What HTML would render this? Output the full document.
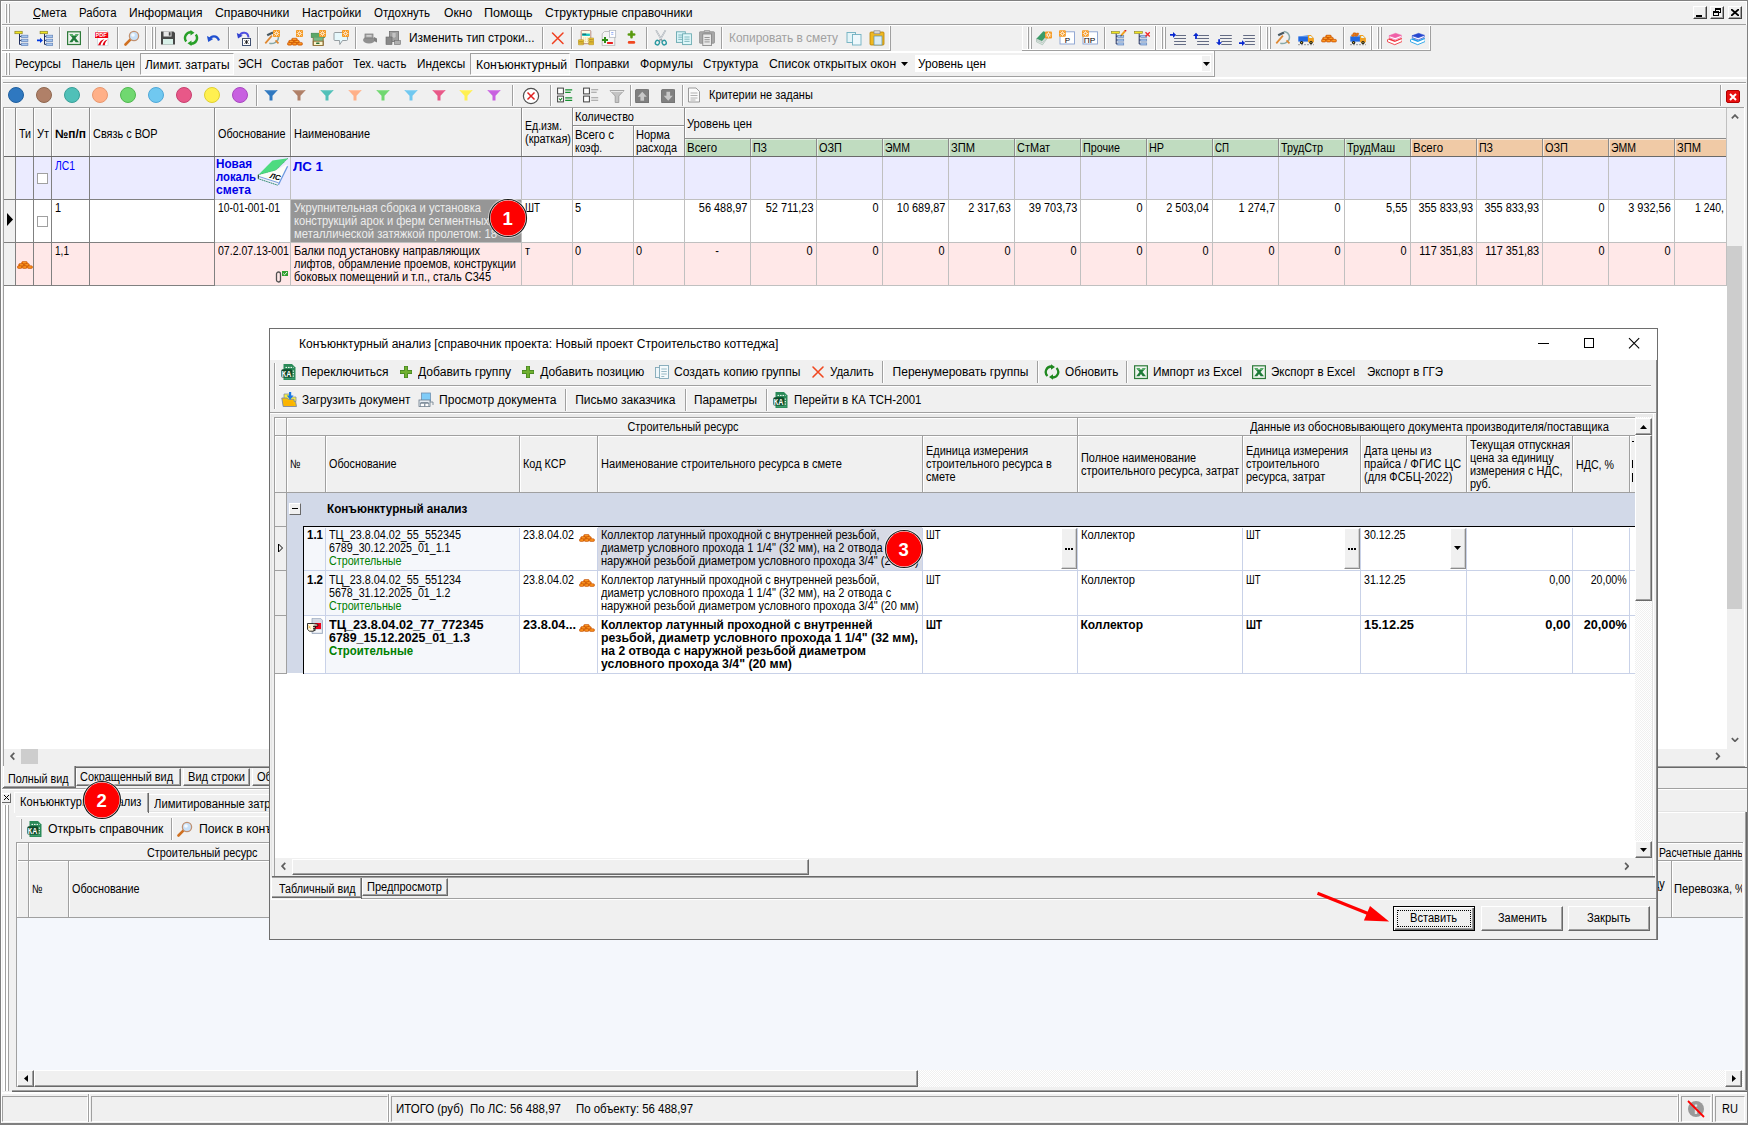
<!DOCTYPE html>
<html lang="ru"><head><meta charset="utf-8"><title>Конъюнктурный анализ</title>
<style>
html,body{margin:0;padding:0;background:#f0f0f0}
#root{position:relative;width:1748px;height:1125px;overflow:hidden;background:#f0f0f0;font-family:"Liberation Sans",sans-serif;font-size:12px;color:#000}
#root div,#root span,#root svg{position:absolute}
#root span{white-space:pre;line-height:14px}
.s{font-family:"Liberation Sans",sans-serif}
.g{font-family:"Liberation Sans",sans-serif}
.btn{background:#e1e1e1;border:1px solid #adadad;box-sizing:border-box}

</style></head><body>
<div id="root">
<div style="left:0px;top:0px;width:1748px;height:1px;background:#808080;"></div>
<div style="left:0px;top:1px;width:1748px;height:1px;background:#ffffff;"></div>
<div style="left:5px;top:4px;width:1px;height:19px;background:#ffffff;"></div>
<div style="left:6px;top:4px;width:1px;height:19px;background:#a0a0a0;"></div>
<div style="left:7px;top:4px;width:1px;height:19px;background:#f0f0f0;"></div>
<div style="left:8px;top:4px;width:1px;height:19px;background:#ffffff;"></div>
<div style="left:9px;top:4px;width:1px;height:19px;background:#a0a0a0;"></div>
<span class="s" style="top:5px;left:33px;transform-origin:0 0;line-height:16px;transform:scaleX(0.956);">Смета</span>
<span class="s" style="top:5px;left:79px;transform-origin:0 0;line-height:16px;transform:scaleX(0.947);">Работа</span>
<span class="s" style="top:5px;left:129px;transform-origin:0 0;line-height:16px;">Информация</span>
<span class="s" style="top:5px;left:215.2px;transform-origin:0 0;line-height:16px;transform:scaleX(1.022);">Справочники</span>
<span class="s" style="top:5px;left:302.3px;transform-origin:0 0;line-height:16px;transform:scaleX(1.009);">Настройки</span>
<span class="s" style="top:5px;left:374.3px;transform-origin:0 0;line-height:16px;transform:scaleX(0.961);">Отдохнуть</span>
<span class="s" style="top:5px;left:443.5px;transform-origin:0 0;line-height:16px;transform:scaleX(1.011);">Окно</span>
<span class="s" style="top:5px;left:484.3px;transform-origin:0 0;line-height:16px;transform:scaleX(1.050);">Помощь</span>
<span class="s" style="top:5px;left:545.2px;transform-origin:0 0;line-height:16px;transform:scaleX(1.013);">Структурные справочники</span>
<div style="left:33px;top:18px;width:7px;height:1px;background:#000;"></div>
<div style="left:1693px;top:6px;width:14px;height:13px;background:#f0f0f0;box-sizing:border-box;border:1px solid;border-color:#fff #404040 #404040 #fff;box-shadow:inset -1px -1px 0 #a0a0a0"></div>
<div style="left:1696px;top:15px;width:6px;height:2px;background:#000;"></div>
<div style="left:1710px;top:6px;width:14px;height:13px;background:#f0f0f0;box-sizing:border-box;border:1px solid;border-color:#fff #404040 #404040 #fff;box-shadow:inset -1px -1px 0 #a0a0a0"></div>
<div style="left:1715px;top:8px;width:6px;height:5px;box-sizing:border-box;border:1px solid #000;border-top-width:2px"></div>
<div style="left:1713px;top:11px;width:6px;height:5px;background:#f0f0f0;box-sizing:border-box;border:1px solid #000;border-top-width:2px"></div>
<div style="left:1728px;top:6px;width:14px;height:13px;background:#f0f0f0;box-sizing:border-box;border:1px solid;border-color:#fff #404040 #404040 #fff;box-shadow:inset -1px -1px 0 #a0a0a0"></div>
<svg style="left:1731px;top:9px" width="8" height="7" viewBox="0 0 8 7"><path d="M0 0l8 7M8 0L0 7" stroke="#000" stroke-width="1.800"/></svg>
<div style="left:0px;top:24px;width:1748px;height:1px;background:#a0a0a0;"></div>
<div style="left:0px;top:25px;width:1431px;height:1px;background:#ffffff;"></div>
<div style="left:0px;top:49px;width:891px;height:1px;background:#ffffff;"></div>
<div style="left:0px;top:50px;width:891px;height:1px;background:#a0a0a0;"></div>
<div style="left:0px;top:51px;width:1215px;height:1px;background:#ffffff;"></div>
<div style="left:0px;top:52px;width:1215px;height:1px;background:#ffffff;"></div>
<div style="left:5px;top:27px;width:1px;height:22px;background:#ffffff;"></div>
<div style="left:6px;top:27px;width:1px;height:22px;background:#a0a0a0;"></div>
<div style="left:7px;top:27px;width:1px;height:22px;background:#f0f0f0;"></div>
<div style="left:8px;top:27px;width:1px;height:22px;background:#ffffff;"></div>
<div style="left:9px;top:27px;width:1px;height:22px;background:#a0a0a0;"></div>
<svg style="left:14px;top:30px" width="16" height="16" viewBox="0 0 16 16"><path d="M5.500 3.700V14.400M5.500 6.400h2M5.500 10.400h2M5.500 14.400h2" stroke="#203060" fill="none"/><rect x=".9" y="1.300" width="7.300" height="2.400" fill="#f0e420" stroke="#8a8428" stroke-width=".7"/><rect x="7.300" y="5.200" width="6.600" height="2.400" fill="#a8c8f0" stroke="#6484b8" stroke-width=".7"/><rect x="7.300" y="9.200" width="6.600" height="2.400" fill="#a8c8f0" stroke="#6484b8" stroke-width=".7"/><rect x="7.300" y="13.200" width="6.600" height="2.400" fill="#a8c8f0" stroke="#6484b8" stroke-width=".7"/></svg>
<svg style="left:37px;top:30px" width="16" height="16" viewBox="0 0 16 16"><path d="M7.500 3.700V14.400M7.500 6.400h2M7.500 10.400h2M7.500 14.400h2" stroke="#203060" fill="none"/><rect x="3.100" y="1.300" width="7.400" height="2.400" fill="#f0e420" stroke="#8a8428" stroke-width=".7"/><rect x="9.200" y="5.200" width="6.500" height="2.400" fill="#a8c8f0" stroke="#6484b8" stroke-width=".7"/><rect x="9.200" y="9.200" width="6.500" height="2.400" fill="#a8c8f0" stroke="#6484b8" stroke-width=".7"/><rect x="9.200" y="13.200" width="6.500" height="2.400" fill="#a8c8f0" stroke="#6484b8" stroke-width=".7"/><path d="M0 9.500h3V7.800L5.900 10.400 3 13v-1.700H0z" fill="#0038e0"/></svg>
<svg style="left:66px;top:30px" width="16" height="16" viewBox="0 0 16 16"><rect x="1.600" y="1.800" width="12.800" height="12.700" fill="#eef4ee" stroke="#2e7a3a" stroke-width="1.200"/><path d="M3.400 4.200h3.100l1.500 2 1.700-2h3L9.500 8l3.500 4.200h-3.300L8 10 6.300 12.200H3.200L6.500 8z" fill="#1e7a38"/><path d="M3.400 4.200h3.100L8 6.200 9.700 4.200h3L11 6H4.800z" fill="#58b068"/></svg>
<svg style="left:95px;top:30px" width="16" height="16" viewBox="0 0 16 16"><path d="M2.500 .5h9l1.500 1.500V15.600H2.500z" fill="#fff" stroke="#c0c8d0" stroke-width=".6"/><rect x="-.8" y="2.400" width="13.900" height="5.600" fill="#f00010"/><text x="6.100" y="7.300" font-size="5.800" font-weight="bold" fill="#fff" text-anchor="middle" font-family="Liberation Sans,sans-serif" textLength="11" lengthAdjust="spacingAndGlyphs">PDF</text><path d="M3 15.300c1.500-4 4-5.800 6.500-6-2.200 1.600-3.500 3.600-4 6zM7.500 15.300c.6-3.200 2.400-5.200 5.200-5.800-1.700 1.400-2.700 3.300-2.900 5.800z" fill="#e00010"/></svg>
<svg style="left:124px;top:30px" width="16" height="16" viewBox="0 0 16 16"><path d="M6.800 9.200L1.500 14.500" stroke="#d07020" stroke-width="2.600" stroke-linecap="round"/><circle cx="10" cy="6" r="4.600" fill="#c8e0f8" stroke="#c09070" stroke-width="1.300"/><circle cx="9" cy="5" r="1.800" fill="#fff" opacity=".8"/></svg>
<div style="left:59px;top:27px;width:1px;height:22px;background:#a0a0a0;"></div>
<div style="left:60px;top:27px;width:1px;height:22px;background:#ffffff;"></div>
<div style="left:88px;top:27px;width:1px;height:22px;background:#a0a0a0;"></div>
<div style="left:89px;top:27px;width:1px;height:22px;background:#ffffff;"></div>
<div style="left:117px;top:27px;width:1px;height:22px;background:#a0a0a0;"></div>
<div style="left:118px;top:27px;width:1px;height:22px;background:#ffffff;"></div>
<div style="left:145px;top:26px;width:1px;height:24px;background:#a0a0a0;"></div>
<div style="left:146px;top:26px;width:1px;height:24px;background:#ffffff;"></div>
<div style="left:151px;top:27px;width:1px;height:22px;background:#ffffff;"></div>
<div style="left:152px;top:27px;width:1px;height:22px;background:#a0a0a0;"></div>
<div style="left:153px;top:27px;width:1px;height:22px;background:#f0f0f0;"></div>
<div style="left:154px;top:27px;width:1px;height:22px;background:#ffffff;"></div>
<div style="left:155px;top:27px;width:1px;height:22px;background:#a0a0a0;"></div>
<svg style="left:160px;top:30px" width="16" height="16" viewBox="0 0 16 16"><path d="M1 1.500h12.500L15 3v11.500H1z" fill="#484848"/><rect x="3.500" y="1.500" width="8" height="5" fill="#e8e8e8"/><rect x="8.800" y="2.200" width="1.800" height="3.400" fill="#484848"/><rect x="3" y="9" width="10" height="5.500" fill="#d8f0e8"/></svg>
<svg style="left:183px;top:30px" width="16" height="16" viewBox="0 0 16 16"><path d="M8 2.200A5.800 5.800 0 0 0 3.200 11.500" fill="none" stroke="#28a028" stroke-width="2.400"/><path d="M8 13.800A5.800 5.800 0 0 0 12.800 4.500" fill="none" stroke="#28a028" stroke-width="2.400"/><path d="M7.500 0l4 2.700-4 2.800zM8.500 16l-4-2.700 4-2.800z" fill="#28a028"/></svg>
<svg style="left:206px;top:30px" width="16" height="16" viewBox="0 0 16 16"><path d="M3.500 9.500C5 5.500 11 5 13 10.500" fill="none" stroke="#2050d0" stroke-width="2.200"/><path d="M1 6l1.200 6 5-3z" fill="#2050d0"/></svg>
<svg style="left:236px;top:30px" width="16" height="16" viewBox="0 0 16 16"><path d="M3.500 6C5 1.500 12 1.500 12.500 7.500" fill="none" stroke="#5050e0" stroke-width="2"/><path d="M.8 3l1.200 5.500 4.600-2.800z" fill="#3040d0"/><rect x="6.500" y="8.500" width="8" height="7" fill="#fff" stroke="#405070" stroke-width="1"/><path d="M8.500 10.500l4 3M12.500 10.500l-4 3M10.500 10v4" stroke="#202020" stroke-width=".9"/></svg>
<svg style="left:264px;top:30px" width="16" height="16" viewBox="0 0 16 16"><path d="M9 1.400C15.500 2.500 16 9.500 11.500 12.300 9.500 13.600 7 13.800 5.300 13.300" fill="none" stroke="#88a8a8" stroke-width="1.500"/><path d="M11.500 10.400l3 3" stroke="#e08830" stroke-width="1.700"/><path d="M1.300 13.400L7.900 5.600" stroke="#e08830" stroke-width="1.700"/><path d="M3.200 5.200L9 2.500" stroke="#485860" stroke-width="2.300"/><rect x="9" y="0" width="7" height="7" rx="1" fill="#f59a23"/><circle cx="12.500" cy="3.500" r="1.350" fill="none" stroke="#fff" stroke-width=".9"/><path d="M12.500 .7v1M12.500 5.300v1M9.700 3.500h1M14.300 3.500h1M10.500 1.500l.7.7M13.800 4.800l.7.7M14.500 1.500l-.7.7M11.200 4.800l-.7.7" stroke="#fff" stroke-width=".8"/></svg>
<svg style="left:287px;top:30px" width="16" height="16" viewBox="0 0 16 16"><g transform="translate(0,1.700)"><g fill="#f07808" stroke="#b84800" stroke-width=".5"><rect x="4.600" y="6.500" width="5.800" height="2.800" rx="1.300"/><rect x="1.600" y="8.600" width="5.300" height="2.700" rx="1.300"/><rect x="7.100" y="8.600" width="5.300" height="2.700" rx="1.300"/><rect x=".4" y="10.700" width="4.600" height="2.800" rx="1.300"/><rect x="5.200" y="10.700" width="4.800" height="2.800" rx="1.300"/><rect x="10.300" y="10.700" width="5.200" height="2.800" rx="1.300"/></g><path d="M6 7.700h3.200M3 9.800h2.800M8.500 9.800h2.800M1.500 12h2.500M6.500 12h2.500M11.500 12h3" stroke="#ffb040" stroke-width=".7"/></g><rect x="9" y="0" width="7" height="7" rx="1" fill="#f59a23"/><circle cx="12.500" cy="3.500" r="1.350" fill="none" stroke="#fff" stroke-width=".9"/><path d="M12.500 .7v1M12.500 5.300v1M9.700 3.500h1M14.300 3.500h1M10.500 1.500l.7.7M13.800 4.800l.7.7M14.500 1.500l-.7.7M11.200 4.800l-.7.7" stroke="#fff" stroke-width=".8"/></svg>
<svg style="left:310px;top:30px" width="16" height="16" viewBox="0 0 16 16"><rect x="1.200" y="3.200" width="13.600" height="4.400" fill="#5aa868" stroke="#3c8048" stroke-width=".6"/><rect x="3.200" y="7.600" width="10" height="3.600" fill="#78b884"/><rect x="3.200" y="11.200" width="10" height="4.300" fill="#fbf4cc" stroke="#8a6a30" stroke-width=".9"/><path d="M3.200 7.600v7.900M13.200 7.600v7.900" stroke="#8a6a30" stroke-width=".9"/><rect x="6" y="12.600" width="3.600" height="1.300" rx=".6" fill="#2a6a30"/><rect x="9" y="0" width="7" height="7" rx="1" fill="#f59a23"/><circle cx="12.500" cy="3.500" r="1.350" fill="none" stroke="#fff" stroke-width=".9"/><path d="M12.500 .7v1M12.500 5.300v1M9.700 3.500h1M14.300 3.500h1M10.500 1.500l.7.7M13.800 4.800l.7.7M14.500 1.500l-.7.7M11.200 4.800l-.7.7" stroke="#fff" stroke-width=".8"/></svg>
<svg style="left:333px;top:30px" width="16" height="16" viewBox="0 0 16 16"><path d="M2 2.500h11.500a1 1 0 0 1 1 1v6a1 1 0 0 1-1 1H9.500L6.800 14.500 6.500 10.500H2a1 1 0 0 1-1-1v-6a1 1 0 0 1 1-1z" fill="#e6f8fc" stroke="#8c9498" stroke-width=".9"/><rect x="9" y="0" width="7" height="7" rx="1" fill="#f59a23"/><circle cx="12.500" cy="3.500" r="1.350" fill="none" stroke="#fff" stroke-width=".9"/><path d="M12.500 .7v1M12.500 5.300v1M9.700 3.500h1M14.300 3.500h1M10.500 1.500l.7.7M13.800 4.800l.7.7M14.500 1.500l-.7.7M11.200 4.800l-.7.7" stroke="#fff" stroke-width=".8"/></svg>
<svg style="left:362px;top:30px" width="16" height="16" viewBox="0 0 16 16"><ellipse cx="7" cy="10" rx="6" ry="3.500" fill="#909090"/><rect x="3" y="4" width="8" height="4" fill="#a8a8a8" stroke="#787878" stroke-width=".7"/><path d="M12 7l3 1.500v4L12 11z" fill="#808080"/><rect x="4.500" y="5.300" width="5" height="1.200" fill="#e0e0e0"/></svg>
<svg style="left:385px;top:30px" width="16" height="16" viewBox="0 0 16 16"><rect x="4.500" y="1.500" width="9" height="10" fill="#a0a0a0" stroke="#707070" stroke-width=".8"/><rect x="1" y="7" width="6" height="7.500" fill="#888" stroke="#686868" stroke-width=".6"/><rect x="9.500" y="10.500" width="6" height="4" fill="#b0b0b0" stroke="#707070" stroke-width=".6"/><path d="M7 4h4M7 6h4M9 3v5" stroke="#d8d8d8" stroke-width=".8"/></svg>
<svg style="left:550px;top:30px" width="16" height="16" viewBox="0 0 16 16"><path d="M2.500 3l10.500 10.500M13 3L2.500 13.500" stroke="#f04020" stroke-width="1.500" stroke-linecap="round"/></svg>
<svg style="left:578px;top:30px" width="16" height="16" viewBox="0 0 16 16"><rect x="3.200" y=".4" width="9.600" height="13.300" rx="1" fill="#fffbe4" stroke="#a87468" stroke-width=".8"/><rect x="4.200" y="3.600" width="7.700" height="2.400" fill="#20c4c4"/><rect x="4.200" y="3.600" width="4" height="1.200" fill="#106868"/><path d="M5 8h6.200M5 9.800h6.200M5 11.600h6.200" stroke="#e8d8a0" stroke-width="1" stroke-dasharray="1.200 .7"/><rect x="0.2" y="9.8" width="5.5" height="1.600" rx=".7" fill="#f4d040" stroke="#a07808" stroke-width=".5"/><rect x="0.2" y="11.5" width="5.5" height="1.600" rx=".7" fill="#f4d040" stroke="#a07808" stroke-width=".5"/><rect x="0.2" y="13.2" width="5.5" height="1.600" rx=".7" fill="#f4d040" stroke="#a07808" stroke-width=".5"/><rect x="10.6" y="8.0" width="5.3" height="1.600" rx=".7" fill="#f4d040" stroke="#a07808" stroke-width=".5"/><rect x="10.6" y="9.7" width="5.3" height="1.600" rx=".7" fill="#f4d040" stroke="#a07808" stroke-width=".5"/><rect x="10.6" y="11.4" width="5.3" height="1.600" rx=".7" fill="#f4d040" stroke="#a07808" stroke-width=".5"/><rect x="10.6" y="13.1" width="5.3" height="1.600" rx=".7" fill="#f4d040" stroke="#a07808" stroke-width=".5"/></svg>
<svg style="left:601px;top:30px" width="16" height="16" viewBox="0 0 16 16"><path d="M3.500 1.500H12l1.800 1.800V15.700H1.200V3.800z" fill="#f4f4f4" stroke="#b0b0b0" stroke-width=".8"/><rect x="8.500" y=".3" width="6.200" height="7" fill="#fff" stroke="#a8b0b8" stroke-width=".7"/><path d="M10.200 2.500h2.200M10.200 4.300h2.200" stroke="#7090f0" stroke-width=".7"/><path d="M1 10h6M4 7v6" stroke="#2c8c14" stroke-width="2"/><rect x="6" y="12" width="6" height="1.900" rx=".6" fill="#e82020"/></svg>
<svg style="left:624px;top:30px" width="16" height="16" viewBox="0 0 16 16"><path d="M4.800 4.500h5.400M7.500 1.800v5.400" stroke="#5a9a10" stroke-width="2.600" stroke-linecap="round"/><rect x="3.800" y="11.100" width="7.400" height="2.700" rx="1.300" fill="#f04820"/></svg>
<svg style="left:653px;top:30px" width="16" height="16" viewBox="0 0 16 16"><path d="M3 .2l6.300 11M12.600 .2L6.300 11.200" stroke="#98a0a8" stroke-width="1.500"/><path d="M3 .2l5 8.800M12.600 .2L7.600 9" stroke="#fff" stroke-width=".6"/><ellipse cx="4.400" cy="12.600" rx="2" ry="2.300" transform="rotate(25 4.400 12.600)" fill="none" stroke="#2898a0" stroke-width="1.400"/><ellipse cx="11.200" cy="12.600" rx="2" ry="2.300" transform="rotate(-25 11.200 12.600)" fill="none" stroke="#2898a0" stroke-width="1.400"/></svg>
<svg style="left:676px;top:30px" width="16" height="16" viewBox="0 0 16 16"><rect x=".5" y="1.800" width="8.800" height="10.600" fill="#d8f4f8" stroke="#68a8b0" stroke-width=".9"/><path d="M2.300 5h4M2.300 7.200h4M2.300 9.400h4" stroke="#68a8b0" stroke-width=".8"/><rect x="6.600" y="3.800" width="8.800" height="10.800" fill="#e0f8fa" stroke="#68a8b0" stroke-width=".9"/><path d="M8.400 7h5.200M8.400 9.200h5.200M8.400 11.400h5.200" stroke="#68a8b0" stroke-width=".8"/></svg>
<svg style="left:699px;top:30px" width="16" height="16" viewBox="0 0 16 16"><rect x=".3" y="1.700" width="15.200" height="11.600" rx="1" fill="#a8a8a8" stroke="#888" stroke-width=".7"/><rect x="5.300" y=".3" width="5.400" height="2.200" rx=".6" fill="#c0c0c0" stroke="#888" stroke-width=".6"/><rect x="3.800" y="4" width="8.600" height="11.600" fill="#e8e8e8" stroke="#808080" stroke-width=".8"/><path d="M5.500 7.500h5.200M5.500 9.700h5.200M5.500 11.900h5.200" stroke="#808080" stroke-width=".8"/></svg>
<svg style="left:846px;top:30px" width="16" height="16" viewBox="0 0 16 16"><rect x="1" y="2.500" width="8.500" height="10" fill="#e4f4f8" stroke="#70b0c0" stroke-width=".9"/><rect x="6.500" y="4.500" width="8.500" height="10.500" fill="#eef8fc" stroke="#70b0c0" stroke-width=".9"/></svg>
<svg style="left:869px;top:30px" width="16" height="16" viewBox="0 0 16 16"><rect x="1" y="2" width="14" height="13" rx="1" fill="#f0b820" stroke="#b88000" stroke-width=".8"/><rect x="5" y=".8" width="6" height="3" fill="#d8d8d8" stroke="#808080" stroke-width=".6"/><rect x="5" y="6" width="8" height="9" fill="#d8ecf4" stroke="#6090a0" stroke-width=".7"/></svg>
<div style="left:228px;top:27px;width:1px;height:22px;background:#a0a0a0;"></div>
<div style="left:229px;top:27px;width:1px;height:22px;background:#ffffff;"></div>
<div style="left:257px;top:27px;width:1px;height:22px;background:#a0a0a0;"></div>
<div style="left:258px;top:27px;width:1px;height:22px;background:#ffffff;"></div>
<div style="left:355px;top:27px;width:1px;height:22px;background:#a0a0a0;"></div>
<div style="left:356px;top:27px;width:1px;height:22px;background:#ffffff;"></div>
<div style="left:542px;top:27px;width:1px;height:22px;background:#a0a0a0;"></div>
<div style="left:543px;top:27px;width:1px;height:22px;background:#ffffff;"></div>
<div style="left:571px;top:27px;width:1px;height:22px;background:#a0a0a0;"></div>
<div style="left:572px;top:27px;width:1px;height:22px;background:#ffffff;"></div>
<div style="left:646px;top:27px;width:1px;height:22px;background:#a0a0a0;"></div>
<div style="left:647px;top:27px;width:1px;height:22px;background:#ffffff;"></div>
<div style="left:721px;top:27px;width:1px;height:22px;background:#a0a0a0;"></div>
<div style="left:722px;top:27px;width:1px;height:22px;background:#ffffff;"></div>
<span class="s" style="top:29.5px;left:409.3px;transform-origin:0 0;line-height:16px;transform:scaleX(0.995);">Изменить тип строки...</span>
<span class="s" style="top:29.5px;left:729px;transform-origin:0 0;line-height:16px;color:#a0a0a0;transform:scaleX(0.993);">Копировать в смету</span>
<div style="left:889px;top:26px;width:1px;height:24px;background:#ffffff;"></div>
<div style="left:890px;top:26px;width:1px;height:25px;background:#a0a0a0;"></div>
<div style="left:1022px;top:26px;width:1px;height:24px;background:#ffffff;"></div>
<div style="left:1027px;top:27px;width:1px;height:22px;background:#ffffff;"></div>
<div style="left:1028px;top:27px;width:1px;height:22px;background:#a0a0a0;"></div>
<div style="left:1029px;top:27px;width:1px;height:22px;background:#f0f0f0;"></div>
<div style="left:1030px;top:27px;width:1px;height:22px;background:#ffffff;"></div>
<div style="left:1031px;top:27px;width:1px;height:22px;background:#a0a0a0;"></div>
<svg style="left:1036px;top:30px" width="16" height="16" viewBox="0 0 16 16"><path d="M.4 8.800L7.300 1.200l5.700 2L6 11.200z" fill="#3c9c68"/><path d="M.4 8.800L6 11.200l7-8v2.600L6.500 14.800.4 11.800z" fill="#e0e8e4" stroke="#88a898" stroke-width=".5"/><path d="M.6 10.300l5.700 2.600 6.500-8" fill="none" stroke="#a8b8b0" stroke-width=".6"/><g transform="translate(0,1.400)"><rect x="9" y="0" width="7" height="7" rx="1" fill="#f59a23"/><circle cx="12.500" cy="3.500" r="1.350" fill="none" stroke="#fff" stroke-width=".9"/><path d="M12.500 .7v1M12.500 5.300v1M9.700 3.500h1M14.300 3.500h1M10.500 1.500l.7.7M13.800 4.800l.7.7M14.500 1.500l-.7.7M11.200 4.800l-.7.7" stroke="#fff" stroke-width=".8"/></g></svg>
<svg style="left:1059px;top:30px" width="16" height="16" viewBox="0 0 16 16"><rect x="1" y="1.800" width="14.500" height="12.200" fill="#fff" stroke="#88a0d0" stroke-width=".9"/><text x="8.500" y="12.900" font-size="8" fill="#000" text-anchor="middle" font-family="Liberation Sans,sans-serif">Р</text><rect x="0" y=".3" width="6.800" height="6.500" rx="1" fill="#f59a23"/><circle cx="3.400" cy="3.500" r="1.300" fill="none" stroke="#fff" stroke-width=".9"/><path d="M3.400 .9v.9M3.400 5.200v.9M.8 3.500h.9M5.100 3.500h.9M1.500 1.600l.6.600M4.700 4.800l.6.600M5.300 1.600l-.6.600M2.100 4.800l-.6.600" stroke="#fff" stroke-width=".8"/></svg>
<svg style="left:1082px;top:30px" width="16" height="16" viewBox="0 0 16 16"><rect x="1" y="1.800" width="14.500" height="12.200" fill="#fff" stroke="#88a0d0" stroke-width=".9"/><text x="7.500" y="12.900" font-size="8" fill="#000" text-anchor="middle" font-family="Liberation Sans,sans-serif" textLength="11.500" lengthAdjust="spacingAndGlyphs">ПР</text><rect x="0" y=".3" width="6.800" height="6.500" rx="1" fill="#f59a23"/><circle cx="3.400" cy="3.500" r="1.300" fill="none" stroke="#fff" stroke-width=".9"/><path d="M3.400 .9v.9M3.400 5.200v.9M.8 3.500h.9M5.100 3.500h.9M1.500 1.600l.6.600M4.700 4.800l.6.600M5.300 1.600l-.6.600M2.100 4.800l-.6.600" stroke="#fff" stroke-width=".8"/></svg>
<svg style="left:1111px;top:30px" width="16" height="16" viewBox="0 0 16 16"><path d="M5.200 3.400V14M5.200 6.300h1.500M5.200 10h1.500M5.200 14h1.500" stroke="#203060" fill="none"/><rect x=".4" y="1.500" width="8" height="1.900" fill="#f0e420" stroke="#8a8428" stroke-width=".6"/><rect x="6.700" y="5.300" width="6" height="2" fill="#a8c8f0" stroke="#6484b8" stroke-width=".7"/><rect x="6.700" y="9.100" width="6" height="2" fill="#a8c8f0" stroke="#6484b8" stroke-width=".7"/><rect x="6.700" y="12.900" width="6" height="2.100" fill="#a8c8f0" stroke="#6484b8" stroke-width=".7"/><path d="M10.300 5.300L14 1.100" stroke="#f0a020" stroke-width="2"/><path d="M14 1.100l.9-1" stroke="#e02020" stroke-width="2"/><path d="M9.400 6.400l1.600-.5-1.100-1z" fill="#202020"/></svg>
<svg style="left:1134px;top:30px" width="16" height="16" viewBox="0 0 16 16"><path d="M5.200 3.400V14M5.200 6.300h1.500M5.200 10h1.500M5.200 14h1.500" stroke="#203060" fill="none"/><rect x=".4" y="1.500" width="8" height="1.900" fill="#f0e420" stroke="#8a8428" stroke-width=".6"/><rect x="6.700" y="5.300" width="6" height="2" fill="#a8c8f0" stroke="#6484b8" stroke-width=".7"/><rect x="6.700" y="9.100" width="6" height="2" fill="#a8c8f0" stroke="#6484b8" stroke-width=".7"/><rect x="6.700" y="12.900" width="6" height="2.100" fill="#a8c8f0" stroke="#6484b8" stroke-width=".7"/><path d="M11.500 2.300l4.300 4.200M15.800 2.300l-4.300 4.200" stroke="#f02828" stroke-width="1.300"/></svg>
<div style="left:1104px;top:27px;width:1px;height:22px;background:#a0a0a0;"></div>
<div style="left:1105px;top:27px;width:1px;height:22px;background:#ffffff;"></div>
<div style="left:1022px;top:49px;width:134px;height:1px;background:#ffffff;"></div>
<div style="left:1022px;top:50px;width:134px;height:1px;background:#a0a0a0;"></div>
<div style="left:1154px;top:26px;width:1px;height:24px;background:#ffffff;"></div>
<div style="left:1155px;top:26px;width:1px;height:25px;background:#a0a0a0;"></div>
<div style="left:1156px;top:26px;width:1px;height:24px;background:#ffffff;"></div>
<div style="left:1161px;top:27px;width:1px;height:22px;background:#ffffff;"></div>
<div style="left:1162px;top:27px;width:1px;height:22px;background:#a0a0a0;"></div>
<div style="left:1163px;top:27px;width:1px;height:22px;background:#f0f0f0;"></div>
<div style="left:1164px;top:27px;width:1px;height:22px;background:#ffffff;"></div>
<div style="left:1165px;top:27px;width:1px;height:22px;background:#a0a0a0;"></div>
<svg style="left:1170px;top:30px" width="16" height="16" viewBox="0 0 16 16"><path d="M6 5.500H16M4.100 8.500H16M4.100 11.500H16M4.100 14.500H16" stroke="#646c84" stroke-width="1.100"/><path d="M0 4h3V2L6.200 4.900 3 7.800V5.800H0z" fill="#0828d0"/></svg>
<svg style="left:1193px;top:30px" width="16" height="16" viewBox="0 0 16 16"><path d="M6 5.500H16M4.100 8.500H16M4.100 11.500H16M4.100 14.500H16" stroke="#646c84" stroke-width="1.100"/><path d="M2.100 8.900V5.900H0L3 2.800 6 5.900H3.900v3z" fill="#0828d0"/></svg>
<svg style="left:1216px;top:30px" width="16" height="16" viewBox="0 0 16 16"><path d="M4 5.500H15.800M4 8.500H15.800M5.300 11.500H15.800M5.300 14.500H15.800" stroke="#646c84" stroke-width="1.100"/><path d="M2.200 9.200v3H0l3.100 3.100 3.100-3.100H4v-3z" fill="#0828d0"/></svg>
<svg style="left:1239px;top:30px" width="16" height="16" viewBox="0 0 16 16"><path d="M4.200 5.500H15.900M4.200 8.500H15.900M5.800 11.500H15.900M5.800 14.500H15.900" stroke="#646c84" stroke-width="1.100"/><path d="M0 12.200h3v-2L6.100 13 3 15.900v-2H0z" fill="#0828d0"/></svg>
<div style="left:1156px;top:49px;width:105px;height:1px;background:#ffffff;"></div>
<div style="left:1156px;top:50px;width:105px;height:1px;background:#a0a0a0;"></div>
<div style="left:1259px;top:26px;width:1px;height:24px;background:#ffffff;"></div>
<div style="left:1260px;top:26px;width:1px;height:25px;background:#a0a0a0;"></div>
<div style="left:1261px;top:26px;width:1px;height:24px;background:#ffffff;"></div>
<div style="left:1266px;top:27px;width:1px;height:22px;background:#ffffff;"></div>
<div style="left:1267px;top:27px;width:1px;height:22px;background:#a0a0a0;"></div>
<div style="left:1268px;top:27px;width:1px;height:22px;background:#f0f0f0;"></div>
<div style="left:1269px;top:27px;width:1px;height:22px;background:#ffffff;"></div>
<div style="left:1270px;top:27px;width:1px;height:22px;background:#a0a0a0;"></div>
<svg style="left:1275px;top:30px" width="16" height="16" viewBox="0 0 16 16"><path d="M9 1.400C15.500 2.500 16 9.500 11.500 12.300 9.500 13.600 7 13.800 5.300 13.300" fill="none" stroke="#88a8a8" stroke-width="1.500"/><path d="M11.500 10.400l3 3" stroke="#e08830" stroke-width="1.700"/><path d="M1.300 13.400L7.900 5.600" stroke="#e08830" stroke-width="1.700"/><path d="M3.200 5.200L9 2.500" stroke="#485860" stroke-width="2.300"/></svg>
<svg style="left:1298px;top:30px" width="16" height="16" viewBox="0 0 16 16"><rect x=".3" y="6.400" width="9.800" height="5.200" fill="#2068e0"/><path d="M.3 6.400L10 5.200v1.300z" fill="#4088f0"/><path d="M9.900 5h3l3 3.200v4h-6z" fill="#f0a020"/><path d="M11.200 6h1.700l1.800 2h-3.500z" fill="#dff4ff"/><path d="M0 14.700h16" stroke="#808080" stroke-width=".8" stroke-dasharray="2 1"/><circle cx="3.600" cy="12.600" r="1.700" fill="#181818"/><circle cx="13" cy="12.600" r="1.700" fill="#181818"/><circle cx="3.600" cy="12.600" r=".6" fill="#f8e040"/><circle cx="13" cy="12.600" r=".6" fill="#f8e040"/></svg>
<svg style="left:1321px;top:30px" width="16" height="16" viewBox="0 0 16 16"><g transform="translate(0,-1.400)"><g fill="#f07808" stroke="#b84800" stroke-width=".5"><rect x="4.600" y="6.500" width="5.800" height="2.800" rx="1.300"/><rect x="1.600" y="8.600" width="5.300" height="2.700" rx="1.300"/><rect x="7.100" y="8.600" width="5.300" height="2.700" rx="1.300"/><rect x=".4" y="10.700" width="4.600" height="2.800" rx="1.300"/><rect x="5.200" y="10.700" width="4.800" height="2.800" rx="1.300"/><rect x="10.300" y="10.700" width="5.200" height="2.800" rx="1.300"/></g><path d="M6 7.700h3.200M3 9.800h2.800M8.500 9.800h2.800M1.500 12h2.500M6.500 12h2.500M11.500 12h3" stroke="#ffb040" stroke-width=".7"/></g></svg>
<svg style="left:1350px;top:30px" width="16" height="16" viewBox="0 0 16 16"><rect x=".3" y="6.400" width="9.800" height="5.200" fill="#2068e0"/><path d="M.3 6.400L10 5.200v1.300z" fill="#4088f0"/><path d="M9.900 5h3l3 3.200v4h-6z" fill="#f0a020"/><path d="M11.200 6h1.700l1.800 2h-3.500z" fill="#dff4ff"/><path d="M0 14.700h16" stroke="#808080" stroke-width=".8" stroke-dasharray="2 1"/><circle cx="3.600" cy="12.600" r="1.700" fill="#181818"/><circle cx="13" cy="12.600" r="1.700" fill="#181818"/><circle cx="3.600" cy="12.600" r=".6" fill="#f8e040"/><circle cx="13" cy="12.600" r=".6" fill="#f8e040"/><g fill="#f07808" stroke="#b84800" stroke-width=".4"><rect x="1.500" y="4.600" width="3" height="1.800" rx=".8"/><rect x="4.700" y="4.400" width="3" height="1.800" rx=".8"/><rect x="3" y="2.800" width="3" height="1.800" rx=".8"/><rect x="6.200" y="3" width="2.600" height="1.700" rx=".8"/></g></svg>
<div style="left:1343px;top:27px;width:1px;height:22px;background:#a0a0a0;"></div>
<div style="left:1344px;top:27px;width:1px;height:22px;background:#ffffff;"></div>
<div style="left:1261px;top:49px;width:111px;height:1px;background:#ffffff;"></div>
<div style="left:1261px;top:50px;width:111px;height:1px;background:#a0a0a0;"></div>
<div style="left:1370px;top:26px;width:1px;height:24px;background:#ffffff;"></div>
<div style="left:1371px;top:26px;width:1px;height:25px;background:#a0a0a0;"></div>
<div style="left:1372px;top:26px;width:1px;height:24px;background:#ffffff;"></div>
<div style="left:1377px;top:27px;width:1px;height:22px;background:#ffffff;"></div>
<div style="left:1378px;top:27px;width:1px;height:22px;background:#a0a0a0;"></div>
<div style="left:1379px;top:27px;width:1px;height:22px;background:#f0f0f0;"></div>
<div style="left:1380px;top:27px;width:1px;height:22px;background:#ffffff;"></div>
<div style="left:1381px;top:27px;width:1px;height:22px;background:#a0a0a0;"></div>
<svg style="left:1386px;top:30px" width="16" height="16" viewBox="0 0 16 16"><path d="M1.500 9.500v2.200l7.200 3 7.500-3.200V9.200" fill="#fff" stroke="#f03840" stroke-width=".9"/><path d="M1.500 9.300l2-1.100 5.700 2.300 6-2.600 1 .9-7.400 3.200z" fill="#f03840"/><path d="M3.300 5.600v2l5.900 2.300 6-2.500V5.200l-6 2.400z" fill="#fff" stroke="#f060a8" stroke-width=".7"/><path d="M3.300 5.600L9.600 3.300l5.600 1.900-6 2.400z" fill="#f060a8" stroke="#f060a8" stroke-width=".5"/></svg>
<svg style="left:1409px;top:30px" width="16" height="16" viewBox="0 0 16 16"><path d="M1.500 9.500v2.200l7.200 3 7.500-3.200V9.200" fill="#fff" stroke="#20a0e8" stroke-width=".9"/><path d="M1.500 9.300l2-1.100 5.700 2.300 6-2.600 1 .9-7.400 3.200z" fill="#20a0e8"/><path d="M3.300 5.600v2l5.900 2.300 6-2.500V5.200l-6 2.400z" fill="#fff" stroke="#2848d0" stroke-width=".7"/><path d="M3.300 5.600L9.600 3.300l5.600 1.900-6 2.400z" fill="#2848d0" stroke="#2848d0" stroke-width=".5"/></svg>
<div style="left:1372px;top:49px;width:59px;height:1px;background:#ffffff;"></div>
<div style="left:1372px;top:50px;width:59px;height:1px;background:#a0a0a0;"></div>
<div style="left:1429px;top:26px;width:1px;height:24px;background:#ffffff;"></div>
<div style="left:1430px;top:26px;width:1px;height:25px;background:#a0a0a0;"></div>
<div style="left:5px;top:53px;width:1px;height:22px;background:#ffffff;"></div>
<div style="left:6px;top:53px;width:1px;height:22px;background:#a0a0a0;"></div>
<div style="left:7px;top:53px;width:1px;height:22px;background:#f0f0f0;"></div>
<div style="left:8px;top:53px;width:1px;height:22px;background:#ffffff;"></div>
<div style="left:9px;top:53px;width:1px;height:22px;background:#a0a0a0;"></div>
<div style="left:0px;top:76px;width:1215px;height:1px;background:#a0a0a0;"></div>
<div style="left:1213px;top:53px;width:1px;height:23px;background:#ffffff;"></div>
<div style="left:1214px;top:51px;width:1px;height:26px;background:#a0a0a0;"></div>
<div style="left:0px;top:77px;width:1748px;height:1px;background:#ffffff;"></div>
<div style="left:0px;top:78px;width:1748px;height:1px;background:#ffffff;"></div>
<div style="left:140px;top:53px;width:94px;height:22px;background:#f8f8f8;box-sizing:border-box;border:1px solid;border-color:#a0a0a0 #fff #fff #a0a0a0"></div>
<div style="left:470px;top:53px;width:100px;height:22px;background:#f8f8f8;box-sizing:border-box;border:1px solid;border-color:#a0a0a0 #fff #fff #a0a0a0"></div>
<span class="s" style="top:55.5px;left:15px;transform-origin:0 0;line-height:16px;transform:scaleX(0.972);">Ресурсы</span>
<span class="s" style="top:55.5px;left:71.5px;transform-origin:0 0;line-height:16px;transform:scaleX(0.972);">Панель цен</span>
<span class="s" style="top:56.5px;left:145px;transform-origin:0 0;line-height:16px;transform:scaleX(0.995);">Лимит. затраты</span>
<span class="s" style="top:55.5px;left:238px;transform-origin:0 0;line-height:16px;transform:scaleX(0.924);">ЭСН</span>
<span class="s" style="top:55.5px;left:271.4px;transform-origin:0 0;line-height:16px;transform:scaleX(0.965);">Состав работ</span>
<span class="s" style="top:55.5px;left:353.4px;transform-origin:0 0;line-height:16px;transform:scaleX(0.946);">Тех. часть</span>
<span class="s" style="top:55.5px;left:416.6px;transform-origin:0 0;line-height:16px;transform:scaleX(0.983);">Индексы</span>
<span class="s" style="top:56.5px;left:475.5px;transform-origin:0 0;line-height:16px;transform:scaleX(1.025);">Конъюнктурный</span>
<span class="s" style="top:55.5px;left:575px;transform-origin:0 0;line-height:16px;transform:scaleX(1.017);">Поправки</span>
<span class="s" style="top:55.5px;left:639.5px;transform-origin:0 0;line-height:16px;transform:scaleX(1.017);">Формулы</span>
<span class="s" style="top:55.5px;left:702.6px;transform-origin:0 0;line-height:16px;transform:scaleX(0.969);">Структура</span>
<span class="s" style="top:55.5px;left:769.4px;transform-origin:0 0;line-height:16px;transform:scaleX(1.021);">Список открытых окон</span>
<svg style="left:901px;top:62px" width="7" height="4" viewBox="0 0 7 4"><path d="M0 0h7L3.500 4z" fill="#000"/></svg>
<div style="left:915px;top:55px;width:296px;height:17px;background:#fff;"></div>
<div style="left:1202px;top:56px;width:8px;height:15px;background:#f0f0f0;"></div>
<span class="s" style="top:55.5px;left:918px;transform-origin:0 0;line-height:16px;transform:scaleX(0.977);">Уровень цен</span>
<svg style="left:1202.500px;top:61.500px" width="7" height="4" viewBox="0 0 7 4"><path d="M0 0h7L3.500 4z" fill="#000"/></svg>
<div style="left:3px;top:82px;width:1743px;height:1px;background:#a0a0a0;"></div>
<div style="left:3px;top:83px;width:1743px;height:1px;background:#ffffff;"></div>
<div style="left:8px;top:87px;width:16px;height:16px;background:#2f78c0;border-radius:50%;box-sizing:border-box;border:1px solid #2060a0"></div>
<div style="left:36px;top:87px;width:16px;height:16px;background:#b08068;border-radius:50%;box-sizing:border-box;border:1px solid #906850"></div>
<div style="left:64px;top:87px;width:16px;height:16px;background:#50c0b8;border-radius:50%;box-sizing:border-box;border:1px solid #38a098"></div>
<div style="left:92px;top:87px;width:16px;height:16px;background:#ffb088;border-radius:50%;box-sizing:border-box;border:1px solid #e89870"></div>
<div style="left:120px;top:87px;width:16px;height:16px;background:#70d870;border-radius:50%;box-sizing:border-box;border:1px solid #50b850"></div>
<div style="left:148px;top:87px;width:16px;height:16px;background:#70c8f0;border-radius:50%;box-sizing:border-box;border:1px solid #50a8d8"></div>
<div style="left:176px;top:87px;width:16px;height:16px;background:#e85888;border-radius:50%;box-sizing:border-box;border:1px solid #c84070"></div>
<div style="left:204px;top:87px;width:16px;height:16px;background:#fff050;border-radius:50%;box-sizing:border-box;border:1px solid #e0d030"></div>
<div style="left:232px;top:87px;width:16px;height:16px;background:#c860e0;border-radius:50%;box-sizing:border-box;border:1px solid #a848c0"></div>
<div style="left:256px;top:85px;width:1px;height:21px;background:#a0a0a0;"></div>
<div style="left:257px;top:85px;width:1px;height:21px;background:#ffffff;"></div>
<svg style="left:263px;top:88px" width="16" height="16" viewBox="0 0 16 16"><path d="M1.200 2h13.600l-5.300 5.800v4.800h-3V7.800z" fill="#2f78c0"/><path d="M2.500 2.600h11" stroke="#fff" stroke-opacity=".35" stroke-width=".8"/></svg>
<svg style="left:291px;top:88px" width="16" height="16" viewBox="0 0 16 16"><path d="M1.200 2h13.600l-5.300 5.800v4.800h-3V7.800z" fill="#b08068"/><path d="M2.500 2.600h11" stroke="#fff" stroke-opacity=".35" stroke-width=".8"/></svg>
<svg style="left:319px;top:88px" width="16" height="16" viewBox="0 0 16 16"><path d="M1.200 2h13.600l-5.300 5.800v4.800h-3V7.800z" fill="#50c0b8"/><path d="M2.500 2.600h11" stroke="#fff" stroke-opacity=".35" stroke-width=".8"/></svg>
<svg style="left:347px;top:88px" width="16" height="16" viewBox="0 0 16 16"><path d="M1.200 2h13.600l-5.300 5.800v4.800h-3V7.800z" fill="#ffb088"/><path d="M2.500 2.600h11" stroke="#fff" stroke-opacity=".35" stroke-width=".8"/></svg>
<svg style="left:375px;top:88px" width="16" height="16" viewBox="0 0 16 16"><path d="M1.200 2h13.600l-5.300 5.800v4.800h-3V7.800z" fill="#70d870"/><path d="M2.500 2.600h11" stroke="#fff" stroke-opacity=".35" stroke-width=".8"/></svg>
<svg style="left:403px;top:88px" width="16" height="16" viewBox="0 0 16 16"><path d="M1.200 2h13.600l-5.300 5.800v4.800h-3V7.800z" fill="#70c8f0"/><path d="M2.500 2.600h11" stroke="#fff" stroke-opacity=".35" stroke-width=".8"/></svg>
<svg style="left:431px;top:88px" width="16" height="16" viewBox="0 0 16 16"><path d="M1.200 2h13.600l-5.300 5.800v4.800h-3V7.800z" fill="#e85888"/><path d="M2.500 2.600h11" stroke="#fff" stroke-opacity=".35" stroke-width=".8"/></svg>
<svg style="left:458px;top:88px" width="16" height="16" viewBox="0 0 16 16"><path d="M1.200 2h13.600l-5.300 5.800v4.800h-3V7.800z" fill="#fff050"/><path d="M2.500 2.600h11" stroke="#fff" stroke-opacity=".35" stroke-width=".8"/></svg>
<svg style="left:486px;top:88px" width="16" height="16" viewBox="0 0 16 16"><path d="M1.200 2h13.600l-5.300 5.800v4.800h-3V7.800z" fill="#c860e0"/><path d="M2.500 2.600h11" stroke="#fff" stroke-opacity=".35" stroke-width=".8"/></svg>
<div style="left:512px;top:85px;width:1px;height:21px;background:#a0a0a0;"></div>
<div style="left:513px;top:85px;width:1px;height:21px;background:#ffffff;"></div>
<svg style="left:522px;top:87px" width="18" height="18" viewBox="0 0 18 18"><circle cx="9" cy="9" r="7.600" fill="#fff" stroke="#505050" stroke-width="1.200"/><path d="M5.500 5.500l7 7M12.500 5.500l-7 7" stroke="#e02020" stroke-width="1.500"/></svg>
<div style="left:550px;top:85px;width:1px;height:21px;background:#a0a0a0;"></div>
<div style="left:551px;top:85px;width:1px;height:21px;background:#ffffff;"></div>
<svg style="left:557px;top:87px" width="16" height="16" viewBox="0 0 16 16"><rect x=".6" y="1.100" width="5.800" height="5.800" fill="#fff" stroke="#404040" stroke-width="1"/><rect x=".6" y="9.100" width="5.800" height="5.800" fill="#fff" stroke="#404040" stroke-width="1"/><path d="M2 11.500l1.500 1.700L5 11" stroke="#108020" stroke-width="1.100" fill="none"/><path d="M8.200 2.800h7M8.200 5.300h5.500M8.200 10.800h7M8.200 13.300h7" stroke="#159030" stroke-width="1.200"/></svg>
<svg style="left:583px;top:87px" width="16" height="16" viewBox="0 0 16 16"><rect x=".6" y="1.100" width="5.800" height="5.800" fill="#fff" stroke="#404040" stroke-width="1"/><rect x=".6" y="9.100" width="5.800" height="5.800" fill="#fff" stroke="#404040" stroke-width="1"/><path d="M8.200 2.800h7M8.200 5.300h5.500M8.200 10.800h7M8.200 13.300h7" stroke="#9c9c9c" stroke-width="1.100"/></svg>
<svg style="left:609px;top:88px" width="16" height="16" viewBox="0 0 16 16"><path d="M1 2.500h14l-5.200 5.500v6.500h-3.600V8z" fill="#c4c4c4" stroke="#969696" stroke-width=".8"/><path d="M2 3.500h12" stroke="#e8e8e8" stroke-width="1"/></svg>
<div style="left:630px;top:85px;width:1px;height:21px;background:#a0a0a0;"></div>
<div style="left:631px;top:85px;width:1px;height:21px;background:#ffffff;"></div>
<svg style="left:634.7px;top:88.7px" width="14.5" height="14.5" viewBox="0 0 16 16"><rect x=".5" y=".5" width="15" height="15" rx="1.500" fill="#808080" stroke="#606060" stroke-width=".8"/><path d="M8 3l5 5.500h-3V13H6V8.500H3z" fill="#c8c8c8"/></svg>
<svg style="left:660.8px;top:88.7px" width="14.5" height="14.5" viewBox="0 0 16 16"><rect x=".5" y=".5" width="15" height="15" rx="1.500" fill="#808080" stroke="#606060" stroke-width=".8"/><path d="M8 13l5-5.500h-3V3H6v4.500H3z" fill="#c8c8c8"/></svg>
<div style="left:682px;top:85px;width:1px;height:21px;background:#a0a0a0;"></div>
<div style="left:683px;top:85px;width:1px;height:21px;background:#ffffff;"></div>
<svg style="left:686px;top:87px" width="16" height="16" viewBox="0 0 16 16"><path d="M2.500 1h7.500l3.500 3.500V15h-11z" fill="#fafafa" stroke="#909090" stroke-width=".9"/><path d="M4.500 6h7M4.500 8.500h7M4.500 11h7M4.500 13h5" stroke="#a0a0a0" stroke-width=".8"/></svg>
<span class="s" style="top:87.3px;left:708.5px;transform-origin:0 0;line-height:16px;transform:scaleX(0.914);">Критерии не заданы</span>
<div style="left:1720px;top:85px;width:1px;height:21px;background:#a0a0a0;"></div>
<div style="left:1721px;top:85px;width:1px;height:21px;background:#ffffff;"></div>
<div style="left:1726px;top:90px;width:14px;height:13px;background:#e81010;border-radius:2px;box-sizing:border-box;border:1px solid #b00000"></div>
<svg style="left:1729px;top:92.500px" width="8" height="8" viewBox="0 0 8 8"><path d="M1 1l6 6M7 1L1 7" stroke="#fff" stroke-width="2"/></svg>
<div style="left:4px;top:108px;width:1723px;height:641px;background:#ffffff;"></div>
<div style="left:3px;top:107px;width:1px;height:660px;background:#a0a0a0;"></div>
<div style="left:3px;top:107px;width:1742px;height:1px;background:#a0a0a0;"></div>
<div style="left:4px;top:108px;width:1723px;height:48px;background:#f0f0f0;"></div>
<div style="left:4px;top:156px;width:11px;height:129px;background:#f0f0f0;"></div>
<div style="left:16px;top:157px;width:1710px;height:42px;background:#ebebff;"></div>
<div style="left:16px;top:243px;width:1710px;height:42px;background:#ffe8e8;"></div>
<div style="left:291px;top:200px;width:230px;height:42px;background:#969696;"></div>
<div style="left:685px;top:139px;width:65px;height:17px;background:#c0dcc0;"></div>
<div style="left:751px;top:139px;width:65px;height:17px;background:#c0dcc0;"></div>
<div style="left:817px;top:139px;width:65px;height:17px;background:#c0dcc0;"></div>
<div style="left:883px;top:139px;width:65px;height:17px;background:#c0dcc0;"></div>
<div style="left:949px;top:139px;width:65px;height:17px;background:#c0dcc0;"></div>
<div style="left:1015px;top:139px;width:65px;height:17px;background:#c0dcc0;"></div>
<div style="left:1081px;top:139px;width:65px;height:17px;background:#c0dcc0;"></div>
<div style="left:1147px;top:139px;width:65px;height:17px;background:#c0dcc0;"></div>
<div style="left:1213px;top:139px;width:65px;height:17px;background:#c0dcc0;"></div>
<div style="left:1279px;top:139px;width:65px;height:17px;background:#c0dcc0;"></div>
<div style="left:1345px;top:139px;width:65px;height:17px;background:#c0dcc0;"></div>
<div style="left:1411px;top:139px;width:65px;height:17px;background:#f0caa6;"></div>
<div style="left:1477px;top:139px;width:65px;height:17px;background:#f0caa6;"></div>
<div style="left:1543px;top:139px;width:65px;height:17px;background:#f0caa6;"></div>
<div style="left:1609px;top:139px;width:65px;height:17px;background:#f0caa6;"></div>
<div style="left:1675px;top:139px;width:51px;height:17px;background:#f0caa6;"></div>
<div style="left:4px;top:108px;width:11px;height:1px;background:#ffffff;"></div>
<div style="left:4px;top:108px;width:1px;height:48px;background:#ffffff;"></div>
<div style="left:16px;top:108px;width:17px;height:1px;background:#ffffff;"></div>
<div style="left:16px;top:108px;width:1px;height:48px;background:#ffffff;"></div>
<div style="left:34px;top:108px;width:17px;height:1px;background:#ffffff;"></div>
<div style="left:34px;top:108px;width:1px;height:48px;background:#ffffff;"></div>
<div style="left:52px;top:108px;width:37px;height:1px;background:#ffffff;"></div>
<div style="left:52px;top:108px;width:1px;height:48px;background:#ffffff;"></div>
<div style="left:90px;top:108px;width:124px;height:1px;background:#ffffff;"></div>
<div style="left:90px;top:108px;width:1px;height:48px;background:#ffffff;"></div>
<div style="left:215px;top:108px;width:75px;height:1px;background:#ffffff;"></div>
<div style="left:215px;top:108px;width:1px;height:48px;background:#ffffff;"></div>
<div style="left:291px;top:108px;width:230px;height:1px;background:#ffffff;"></div>
<div style="left:291px;top:108px;width:1px;height:48px;background:#ffffff;"></div>
<div style="left:522px;top:108px;width:50px;height:1px;background:#ffffff;"></div>
<div style="left:522px;top:108px;width:1px;height:48px;background:#ffffff;"></div>
<div style="left:573px;top:108px;width:111px;height:1px;background:#ffffff;"></div>
<div style="left:573px;top:108px;width:1px;height:17px;background:#ffffff;"></div>
<div style="left:573px;top:126px;width:60px;height:1px;background:#ffffff;"></div>
<div style="left:573px;top:126px;width:1px;height:30px;background:#ffffff;"></div>
<div style="left:634px;top:126px;width:50px;height:1px;background:#ffffff;"></div>
<div style="left:634px;top:126px;width:1px;height:30px;background:#ffffff;"></div>
<div style="left:685px;top:108px;width:1041px;height:1px;background:#ffffff;"></div>
<div style="left:685px;top:108px;width:1px;height:30px;background:#ffffff;"></div>
<div style="left:685px;top:139px;width:65px;height:1px;background:rgba(255,255,255,.55);"></div>
<div style="left:685px;top:139px;width:1px;height:17px;background:rgba(255,255,255,.55);"></div>
<div style="left:751px;top:139px;width:65px;height:1px;background:rgba(255,255,255,.55);"></div>
<div style="left:751px;top:139px;width:1px;height:17px;background:rgba(255,255,255,.55);"></div>
<div style="left:817px;top:139px;width:65px;height:1px;background:rgba(255,255,255,.55);"></div>
<div style="left:817px;top:139px;width:1px;height:17px;background:rgba(255,255,255,.55);"></div>
<div style="left:883px;top:139px;width:65px;height:1px;background:rgba(255,255,255,.55);"></div>
<div style="left:883px;top:139px;width:1px;height:17px;background:rgba(255,255,255,.55);"></div>
<div style="left:949px;top:139px;width:65px;height:1px;background:rgba(255,255,255,.55);"></div>
<div style="left:949px;top:139px;width:1px;height:17px;background:rgba(255,255,255,.55);"></div>
<div style="left:1015px;top:139px;width:65px;height:1px;background:rgba(255,255,255,.55);"></div>
<div style="left:1015px;top:139px;width:1px;height:17px;background:rgba(255,255,255,.55);"></div>
<div style="left:1081px;top:139px;width:65px;height:1px;background:rgba(255,255,255,.55);"></div>
<div style="left:1081px;top:139px;width:1px;height:17px;background:rgba(255,255,255,.55);"></div>
<div style="left:1147px;top:139px;width:65px;height:1px;background:rgba(255,255,255,.55);"></div>
<div style="left:1147px;top:139px;width:1px;height:17px;background:rgba(255,255,255,.55);"></div>
<div style="left:1213px;top:139px;width:65px;height:1px;background:rgba(255,255,255,.55);"></div>
<div style="left:1213px;top:139px;width:1px;height:17px;background:rgba(255,255,255,.55);"></div>
<div style="left:1279px;top:139px;width:65px;height:1px;background:rgba(255,255,255,.55);"></div>
<div style="left:1279px;top:139px;width:1px;height:17px;background:rgba(255,255,255,.55);"></div>
<div style="left:1345px;top:139px;width:65px;height:1px;background:rgba(255,255,255,.55);"></div>
<div style="left:1345px;top:139px;width:1px;height:17px;background:rgba(255,255,255,.55);"></div>
<div style="left:1411px;top:139px;width:65px;height:1px;background:rgba(255,255,255,.55);"></div>
<div style="left:1411px;top:139px;width:1px;height:17px;background:rgba(255,255,255,.55);"></div>
<div style="left:1477px;top:139px;width:65px;height:1px;background:rgba(255,255,255,.55);"></div>
<div style="left:1477px;top:139px;width:1px;height:17px;background:rgba(255,255,255,.55);"></div>
<div style="left:1543px;top:139px;width:65px;height:1px;background:rgba(255,255,255,.55);"></div>
<div style="left:1543px;top:139px;width:1px;height:17px;background:rgba(255,255,255,.55);"></div>
<div style="left:1609px;top:139px;width:65px;height:1px;background:rgba(255,255,255,.55);"></div>
<div style="left:1609px;top:139px;width:1px;height:17px;background:rgba(255,255,255,.55);"></div>
<div style="left:1675px;top:139px;width:51px;height:1px;background:rgba(255,255,255,.55);"></div>
<div style="left:1675px;top:139px;width:1px;height:17px;background:rgba(255,255,255,.55);"></div>
<div style="left:15px;top:108px;width:1px;height:48px;background:#8c8c8c;"></div>
<div style="left:33px;top:108px;width:1px;height:48px;background:#8c8c8c;"></div>
<div style="left:51px;top:108px;width:1px;height:48px;background:#8c8c8c;"></div>
<div style="left:89px;top:108px;width:1px;height:48px;background:#8c8c8c;"></div>
<div style="left:214px;top:108px;width:1px;height:48px;background:#8c8c8c;"></div>
<div style="left:290px;top:108px;width:1px;height:48px;background:#8c8c8c;"></div>
<div style="left:521px;top:108px;width:1px;height:48px;background:#8c8c8c;"></div>
<div style="left:572px;top:108px;width:1px;height:48px;background:#8c8c8c;"></div>
<div style="left:684px;top:108px;width:1px;height:48px;background:#8c8c8c;"></div>
<div style="left:633px;top:126px;width:1px;height:30px;background:#8c8c8c;"></div>
<div style="left:750px;top:139px;width:1px;height:17px;background:#8c8c8c;"></div>
<div style="left:816px;top:139px;width:1px;height:17px;background:#8c8c8c;"></div>
<div style="left:882px;top:139px;width:1px;height:17px;background:#8c8c8c;"></div>
<div style="left:948px;top:139px;width:1px;height:17px;background:#8c8c8c;"></div>
<div style="left:1014px;top:139px;width:1px;height:17px;background:#8c8c8c;"></div>
<div style="left:1080px;top:139px;width:1px;height:17px;background:#8c8c8c;"></div>
<div style="left:1146px;top:139px;width:1px;height:17px;background:#8c8c8c;"></div>
<div style="left:1212px;top:139px;width:1px;height:17px;background:#8c8c8c;"></div>
<div style="left:1278px;top:139px;width:1px;height:17px;background:#8c8c8c;"></div>
<div style="left:1344px;top:139px;width:1px;height:17px;background:#8c8c8c;"></div>
<div style="left:1410px;top:139px;width:1px;height:17px;background:#8c8c8c;"></div>
<div style="left:1476px;top:139px;width:1px;height:17px;background:#8c8c8c;"></div>
<div style="left:1542px;top:139px;width:1px;height:17px;background:#8c8c8c;"></div>
<div style="left:1608px;top:139px;width:1px;height:17px;background:#8c8c8c;"></div>
<div style="left:1674px;top:139px;width:1px;height:17px;background:#8c8c8c;"></div>
<div style="left:684px;top:108px;width:1px;height:48px;background:#8c8c8c;"></div>
<div style="left:572px;top:125px;width:112px;height:1px;background:#8c8c8c;"></div>
<div style="left:684px;top:138px;width:1042px;height:1px;background:#8c8c8c;"></div>
<div style="left:4px;top:156px;width:1722px;height:1px;background:#696969;"></div>
<div style="left:15px;top:157px;width:1px;height:128px;background:#808080;"></div>
<div style="left:33px;top:157px;width:1px;height:128px;background:#808080;"></div>
<div style="left:51px;top:157px;width:1px;height:128px;background:#808080;"></div>
<div style="left:89px;top:157px;width:1px;height:128px;background:#808080;"></div>
<div style="left:214px;top:157px;width:1px;height:128px;background:#808080;"></div>
<div style="left:290px;top:157px;width:1px;height:128px;background:#c0c0c0;"></div>
<div style="left:521px;top:157px;width:1px;height:128px;background:#c0c0c0;"></div>
<div style="left:572px;top:157px;width:1px;height:128px;background:#c0c0c0;"></div>
<div style="left:633px;top:157px;width:1px;height:128px;background:#c0c0c0;"></div>
<div style="left:684px;top:157px;width:1px;height:128px;background:#c0c0c0;"></div>
<div style="left:750px;top:157px;width:1px;height:128px;background:#c0c0c0;"></div>
<div style="left:816px;top:157px;width:1px;height:128px;background:#c0c0c0;"></div>
<div style="left:882px;top:157px;width:1px;height:128px;background:#c0c0c0;"></div>
<div style="left:948px;top:157px;width:1px;height:128px;background:#c0c0c0;"></div>
<div style="left:1014px;top:157px;width:1px;height:128px;background:#c0c0c0;"></div>
<div style="left:1080px;top:157px;width:1px;height:128px;background:#c0c0c0;"></div>
<div style="left:1146px;top:157px;width:1px;height:128px;background:#c0c0c0;"></div>
<div style="left:1212px;top:157px;width:1px;height:128px;background:#c0c0c0;"></div>
<div style="left:1278px;top:157px;width:1px;height:128px;background:#c0c0c0;"></div>
<div style="left:1344px;top:157px;width:1px;height:128px;background:#c0c0c0;"></div>
<div style="left:1410px;top:157px;width:1px;height:128px;background:#c0c0c0;"></div>
<div style="left:1476px;top:157px;width:1px;height:128px;background:#c0c0c0;"></div>
<div style="left:1542px;top:157px;width:1px;height:128px;background:#c0c0c0;"></div>
<div style="left:1608px;top:157px;width:1px;height:128px;background:#c0c0c0;"></div>
<div style="left:1674px;top:157px;width:1px;height:128px;background:#c0c0c0;"></div>
<div style="left:4px;top:199px;width:211px;height:1px;background:#808080;"></div>
<div style="left:215px;top:199px;width:1511px;height:1px;background:#c0c0c0;"></div>
<div style="left:4px;top:242px;width:211px;height:1px;background:#808080;"></div>
<div style="left:215px;top:242px;width:1511px;height:1px;background:#c0c0c0;"></div>
<div style="left:4px;top:285px;width:211px;height:1px;background:#808080;"></div>
<div style="left:215px;top:285px;width:1511px;height:1px;background:#c0c0c0;"></div>
<div style="left:1726px;top:108px;width:1px;height:178px;background:#c0c0c0;"></div>
<span class="g" style="top:126.5px;left:19px;transform-origin:0 0;transform:scaleX(0.888);">Ти</span>
<span class="g" style="top:126.5px;left:37px;transform-origin:0 0;transform:scaleX(0.914);">Ут</span>
<span class="g" style="top:126.5px;left:55px;transform-origin:0 0;font-weight:bold;transform:scaleX(0.993);">№п/п</span>
<span class="g" style="top:126.5px;left:92.5px;transform-origin:0 0;transform:scaleX(0.911);">Связь с ВОР</span>
<span class="g" style="top:126.5px;left:217.5px;transform-origin:0 0;transform:scaleX(0.899);">Обоснование</span>
<span class="g" style="top:126.5px;left:293.5px;transform-origin:0 0;transform:scaleX(0.914);">Наименование</span>
<span class="g" style="top:119px;left:524.5px;transform-origin:0 0;transform:scaleX(0.878);">Ед.изм.</span>
<span class="g" style="top:132px;left:524.5px;transform-origin:0 0;transform:scaleX(0.911);">(краткая)</span>
<span class="g" style="top:110px;left:575px;transform-origin:0 0;transform:scaleX(0.915);">Количество</span>
<span class="g" style="top:128px;left:575px;transform-origin:0 0;transform:scaleX(0.956);">Всего с</span>
<span class="g" style="top:141px;left:575px;transform-origin:0 0;transform:scaleX(0.860);">коэф.</span>
<span class="g" style="top:128px;left:636px;transform-origin:0 0;transform:scaleX(0.920);">Норма</span>
<span class="g" style="top:141px;left:636px;transform-origin:0 0;transform:scaleX(0.905);">расхода</span>
<span class="g" style="top:117px;left:687px;transform-origin:0 0;transform:scaleX(0.934);">Уровень цен</span>
<span class="g" style="top:141px;left:687px;transform-origin:0 0;transform:scaleX(0.953);">Всего</span>
<span class="g" style="top:141px;left:753px;transform-origin:0 0;transform:scaleX(0.882);">ПЗ</span>
<span class="g" style="top:141px;left:819px;transform-origin:0 0;transform:scaleX(0.912);">ОЗП</span>
<span class="g" style="top:141px;left:885px;transform-origin:0 0;transform:scaleX(0.873);">ЭММ</span>
<span class="g" style="top:141px;left:951px;transform-origin:0 0;transform:scaleX(0.928);">ЗПМ</span>
<span class="g" style="top:141px;left:1017px;transform-origin:0 0;transform:scaleX(0.912);">СтМат</span>
<span class="g" style="top:141px;left:1083px;transform-origin:0 0;transform:scaleX(0.895);">Прочие</span>
<span class="g" style="top:141px;left:1149px;transform-origin:0 0;transform:scaleX(0.900);">НР</span>
<span class="g" style="top:141px;left:1215px;transform-origin:0 0;transform:scaleX(0.809);">СП</span>
<span class="g" style="top:141px;left:1281px;transform-origin:0 0;transform:scaleX(0.901);">ТрудСтр</span>
<span class="g" style="top:141px;left:1347px;transform-origin:0 0;transform:scaleX(0.919);">ТрудМаш</span>
<span class="g" style="top:141px;left:1413px;transform-origin:0 0;transform:scaleX(0.953);">Всего</span>
<span class="g" style="top:141px;left:1479px;transform-origin:0 0;transform:scaleX(0.882);">ПЗ</span>
<span class="g" style="top:141px;left:1545px;transform-origin:0 0;transform:scaleX(0.912);">ОЗП</span>
<span class="g" style="top:141px;left:1611px;transform-origin:0 0;transform:scaleX(0.873);">ЭММ</span>
<span class="g" style="top:141px;left:1677px;transform-origin:0 0;transform:scaleX(0.928);">ЗПМ</span>
<span class="g" style="top:159px;left:55px;transform-origin:0 0;color:#0000ff;transform:scaleX(0.861);">ЛС1</span>
<div style="left:37px;top:173px;width:11px;height:11px;background:#ffffff;box-sizing:border-box;border:1px solid #a0a0a0"></div>
<div style="left:37px;top:216px;width:11px;height:11px;background:#ffffff;box-sizing:border-box;border:1px solid #a0a0a0"></div>
<span class="g" style="top:158px;left:216px;transform-origin:0 0;line-height:13px;color:#0000e8;font-weight:bold;transform:scaleX(0.976);">Новая</span>
<span class="g" style="top:171px;left:216px;transform-origin:0 0;line-height:13px;color:#0000e8;font-weight:bold;transform:scaleX(0.942);">локаль</span>
<span class="g" style="top:184px;left:216px;transform-origin:0 0;line-height:13px;color:#0000e8;font-weight:bold;transform:scaleX(1.011);">смета</span>
<span class="g" style="top:160px;left:293px;transform-origin:0 0;font-size:13px;color:#0000e8;font-weight:bold;transform:scaleX(1.022);">ЛС 1</span>
<svg style="left:250px;top:152px" width="50" height="40" viewBox="0 0 50 40"><path d="M8.200 23L22.500 8.500 38 6.200 25.600 18.600z" fill="#4ddb80"/><path d="M8.200 23l17.400-4.400L38 6.200" fill="none" stroke="#2c9a5c" stroke-width=".7" stroke-dasharray="1.200 .6"/><path d="M8.400 23.200l17.200-4.600 10.800-6 1.300 1.900L28.800 31 8.400 24.500z" fill="#fdfdf8"/><path d="M8.300 24.200l20.300 6.600-.6 2.700L8.300 26.600z" fill="#eef0fa"/><path d="M8.300 24.300l20.300 6.500" stroke="#7fa0e0" stroke-width="1"/><path d="M8.300 26.700l19.700 6.600" stroke="#2f8a70" stroke-width="1" stroke-dasharray="1.400 .5"/><path d="M37.600 14.300L28.400 32.800" stroke="#6a98e0" stroke-width="1.300"/><path d="M8.300 22.800v3.800" stroke="#103010" stroke-width="1"/><text x="19.500" y="26" font-size="7.500" font-style="italic" font-weight="bold" font-family="Liberation Sans,sans-serif" transform="rotate(14 19.500 26)" fill="#000">ЛС</text></svg>
<svg style="left:6px;top:213px" width="8" height="13" viewBox="0 0 8 13"><path d="M1 0l6 6.500L1 13z" fill="#000"/></svg>
<span class="g" style="top:201px;left:55px;transform-origin:0 0;transform:scaleX(0.910);">1</span>
<span class="g" style="top:201px;left:217.5px;transform-origin:0 0;transform:scaleX(0.860);">10-01-001-01</span>
<span class="g" style="top:201.5px;left:293.5px;transform-origin:0 0;line-height:13px;color:#ececec;transform:scaleX(0.934);">Укрупнительная сборка и установка</span>
<span class="g" style="top:214.5px;left:293.5px;transform-origin:0 0;line-height:13px;color:#ececec;transform:scaleX(0.927);">конструкций арок и ферм сегментных</span>
<span class="g" style="top:227.5px;left:293.5px;transform-origin:0 0;line-height:13px;color:#ececec;transform:scaleX(0.942);">металлической затяжкой пролетом: 18</span>
<span class="g" style="top:201px;left:524.5px;transform-origin:0 0;transform:scaleX(0.818);">ШТ</span>
<span class="g" style="top:201px;left:575px;transform-origin:0 0;transform:scaleX(0.910);">5</span>
<span class="g" style="top:201px;right:1001px;transform-origin:100% 0;transform:scaleX(0.910);">56 488,97</span>
<span class="g" style="top:201px;right:935px;transform-origin:100% 0;transform:scaleX(0.910);">52 711,23</span>
<span class="g" style="top:201px;right:869px;transform-origin:100% 0;transform:scaleX(0.910);">0</span>
<span class="g" style="top:201px;right:803px;transform-origin:100% 0;transform:scaleX(0.910);">10 689,87</span>
<span class="g" style="top:201px;right:737px;transform-origin:100% 0;transform:scaleX(0.910);">2 317,63</span>
<span class="g" style="top:201px;right:671px;transform-origin:100% 0;transform:scaleX(0.910);">39 703,73</span>
<span class="g" style="top:201px;right:605px;transform-origin:100% 0;transform:scaleX(0.910);">0</span>
<span class="g" style="top:201px;right:539px;transform-origin:100% 0;transform:scaleX(0.910);">2 503,04</span>
<span class="g" style="top:201px;right:473px;transform-origin:100% 0;transform:scaleX(0.910);">1 274,7</span>
<span class="g" style="top:201px;right:407px;transform-origin:100% 0;transform:scaleX(0.910);">0</span>
<span class="g" style="top:201px;right:341px;transform-origin:100% 0;transform:scaleX(0.910);">5,55</span>
<span class="g" style="top:201px;right:275px;transform-origin:100% 0;transform:scaleX(0.910);">355 833,93</span>
<span class="g" style="top:201px;right:209px;transform-origin:100% 0;transform:scaleX(0.910);">355 833,93</span>
<span class="g" style="top:201px;right:143px;transform-origin:100% 0;transform:scaleX(0.910);">0</span>
<span class="g" style="top:201px;right:77px;transform-origin:100% 0;transform:scaleX(0.910);">3 932,56</span>
<span class="g" style="top:201px;left:1695px;transform-origin:0 0;transform:scaleX(0.869);">1 240,</span>
<svg style="left:16.5px;top:254.5px" width="16" height="16" viewBox="0 0 16 16"><g fill="#f07808" stroke="#b84800" stroke-width=".5"><rect x="4.600" y="6.500" width="5.800" height="2.800" rx="1.300"/><rect x="1.600" y="8.600" width="5.300" height="2.700" rx="1.300"/><rect x="7.100" y="8.600" width="5.300" height="2.700" rx="1.300"/><rect x=".4" y="10.700" width="4.600" height="2.800" rx="1.300"/><rect x="5.200" y="10.700" width="4.800" height="2.800" rx="1.300"/><rect x="10.300" y="10.700" width="5.200" height="2.800" rx="1.300"/></g><path d="M6 7.700h3.200M3 9.800h2.800M8.500 9.800h2.800M1.500 12h2.500M6.500 12h2.500M11.500 12h3" stroke="#ffb040" stroke-width=".7"/></svg>
<span class="g" style="top:244px;left:55px;transform-origin:0 0;transform:scaleX(0.839);">1,1</span>
<span class="g" style="top:244px;left:217.5px;transform-origin:0 0;transform:scaleX(0.879);">07.2.07.13-001</span>
<span class="g" style="top:244.5px;left:293.5px;transform-origin:0 0;line-height:13px;transform:scaleX(0.918);">Балки под установку направляющих</span>
<span class="g" style="top:257.5px;left:293.5px;transform-origin:0 0;line-height:13px;transform:scaleX(0.912);">лифтов, обрамление проемов, конструкции</span>
<span class="g" style="top:270.5px;left:293.5px;transform-origin:0 0;line-height:13px;transform:scaleX(0.916);">боковых помещений и т.п., сталь С345</span>
<svg style="left:275px;top:270px" width="14" height="13" viewBox="0 0 14 13"><rect x="1.500" y="2" width="4" height="10" rx="2" fill="none" stroke="#505050" stroke-width="1.300"/><rect x="7" y="1" width="6" height="5" fill="#30a030"/><path d="M8.200 3.500l1.300 1.300L12 2" stroke="#fff" stroke-width=".9" fill="none"/></svg>
<span class="g" style="top:244px;left:524.5px;transform-origin:0 0;transform:scaleX(0.910);">т</span>
<span class="g" style="top:244px;left:575px;transform-origin:0 0;transform:scaleX(0.910);">0</span>
<span class="g" style="top:244px;left:636px;transform-origin:0 0;transform:scaleX(0.910);">0</span>
<span class="g" style="top:244px;left:717px;transform-origin:50% 0;transform:translateX(-50%) scaleX(0.910);">-</span>
<span class="g" style="top:244px;right:935px;transform-origin:100% 0;transform:scaleX(0.910);">0</span>
<span class="g" style="top:244px;right:869px;transform-origin:100% 0;transform:scaleX(0.910);">0</span>
<span class="g" style="top:244px;right:803px;transform-origin:100% 0;transform:scaleX(0.910);">0</span>
<span class="g" style="top:244px;right:737px;transform-origin:100% 0;transform:scaleX(0.910);">0</span>
<span class="g" style="top:244px;right:671px;transform-origin:100% 0;transform:scaleX(0.910);">0</span>
<span class="g" style="top:244px;right:605px;transform-origin:100% 0;transform:scaleX(0.910);">0</span>
<span class="g" style="top:244px;right:539px;transform-origin:100% 0;transform:scaleX(0.910);">0</span>
<span class="g" style="top:244px;right:473px;transform-origin:100% 0;transform:scaleX(0.910);">0</span>
<span class="g" style="top:244px;right:407px;transform-origin:100% 0;transform:scaleX(0.910);">0</span>
<span class="g" style="top:244px;right:341px;transform-origin:100% 0;transform:scaleX(0.910);">0</span>
<span class="g" style="top:244px;right:275px;transform-origin:100% 0;transform:scaleX(0.910);">117 351,83</span>
<span class="g" style="top:244px;right:209px;transform-origin:100% 0;transform:scaleX(0.910);">117 351,83</span>
<span class="g" style="top:244px;right:143px;transform-origin:100% 0;transform:scaleX(0.910);">0</span>
<span class="g" style="top:244px;right:77px;transform-origin:100% 0;transform:scaleX(0.910);">0</span>
<div style="left:1727px;top:108px;width:17px;height:641px;background:#f0f0f0;"></div>
<div style="left:1727px;top:246px;width:15px;height:363px;background:#cdcdcd;"></div>
<svg style="left:1730.5px;top:114.3px" width="8" height="5.400" viewBox="0 0 8 5.400"><path d="M.8 4.300L4 1.100 7.200 4.300" stroke="#5e5e5e" stroke-width="1.700" fill="none"/></svg>
<svg style="left:1730.5px;top:737.0999999999999px" width="8" height="5.400" viewBox="0 0 8 5.400"><path d="M.8 1.100L4 4.300 7.200 1.100" stroke="#5e5e5e" stroke-width="1.700" fill="none"/></svg>
<div style="left:4px;top:749px;width:1740px;height:17px;background:#f0f0f0;"></div>
<div style="left:21px;top:749px;width:17px;height:15px;background:#cdcdcd;"></div>
<svg style="left:9.7px;top:752.3px" width="5.400" height="8.400" viewBox="0 0 5.400 8.400"><path d="M4.300 .8L1.100 4.200 4.300 7.600" stroke="#5e5e5e" stroke-width="1.700" fill="none"/></svg>
<svg style="left:1715.3px;top:752.3px" width="5.400" height="8.400" viewBox="0 0 5.400 8.400"><path d="M1.100 .8L4.300 4.200 1.100 7.600" stroke="#5e5e5e" stroke-width="1.700" fill="none"/></svg>
<div style="left:1744px;top:107px;width:1px;height:660px;background:#ffffff;"></div>
<div style="left:4px;top:766px;width:71px;height:1px;background:#f0f0f0;"></div>
<div style="left:76px;top:766px;width:1669px;height:1px;background:#a0a0a0;"></div>
<div style="left:75px;top:767px;width:1672px;height:1px;background:#696969;"></div>
<div style="left:3px;top:766px;width:1px;height:21px;background:#ffffff;"></div>
<div style="left:74px;top:766px;width:1px;height:21px;background:#a0a0a0;"></div>
<div style="left:75px;top:766px;width:1px;height:22px;background:#696969;"></div>
<div style="left:4px;top:786px;width:71px;height:1px;background:#a0a0a0;"></div>
<div style="left:3px;top:787px;width:73px;height:1px;background:#696969;"></div>
<span class="g" style="top:772px;left:7.5px;transform-origin:0 0;transform:scaleX(0.898);">Полный вид</span>
<div style="left:76px;top:768px;width:105px;height:18px;background:#f0f0f0;box-sizing:border-box;border:1px solid;border-color:#f0f0f0 #696969 #696969 #ffffff;box-shadow:inset -1px -1px 0 #a0a0a0"></div>
<span class="g" style="top:770px;left:80px;transform-origin:0 0;transform:scaleX(0.909);">Сокращенный вид</span>
<div style="left:183px;top:768px;width:67px;height:18px;background:#f0f0f0;box-sizing:border-box;border:1px solid;border-color:#f0f0f0 #696969 #696969 #ffffff;box-shadow:inset -1px -1px 0 #a0a0a0"></div>
<span class="g" style="top:770px;left:188px;transform-origin:0 0;transform:scaleX(0.922);">Вид строки</span>
<div style="left:252px;top:768px;width:78px;height:18px;background:#f0f0f0;box-sizing:border-box;border:1px solid;border-color:#f0f0f0 #696969 #696969 #ffffff;box-shadow:inset -1px -1px 0 #a0a0a0"></div>
<span class="g" style="top:770px;left:257px;transform-origin:0 0;transform:scaleX(0.923);">Объектная</span>
<div style="left:0px;top:788px;width:1748px;height:1px;background:#a0a0a0;"></div>
<div style="left:0px;top:789px;width:1748px;height:1px;background:#ffffff;"></div>
<div style="left:1px;top:793px;width:10px;height:10px;background:#f0f0f0;box-sizing:border-box;border:1px solid;border-color:#fff #696969 #696969 #fff"></div>
<svg style="left:2.500px;top:794px" width="7" height="7" viewBox="0 0 7 7"><path d="M1 1l5 5M6 1L1 6" stroke="#000" stroke-width="1"/></svg>
<div style="left:3px;top:805px;width:2px;height:286px;background:#fff;"></div>
<div style="left:5px;top:805px;width:1px;height:286px;background:#a0a0a0;"></div>
<div style="left:6px;top:805px;width:2px;height:286px;background:#fff;"></div>
<div style="left:8px;top:805px;width:1px;height:286px;background:#a0a0a0;"></div>
<div style="left:14px;top:792px;width:134px;height:1px;background:#ffffff;"></div>
<div style="left:14px;top:792px;width:1px;height:21px;background:#ffffff;"></div>
<div style="left:147px;top:793px;width:1px;height:19px;background:#a0a0a0;"></div>
<div style="left:148px;top:793px;width:1px;height:20px;background:#696969;"></div>
<span class="g" style="top:795px;left:20px;transform-origin:0 0;transform:scaleX(0.924);">Конъюнктурный анализ</span>
<span class="g" style="top:797px;left:153.6px;transform-origin:0 0;transform:scaleX(0.941);">Лимитированные затраты</span>
<div style="left:149px;top:794px;width:180px;height:1px;background:#ffffff;"></div>
<div style="left:149px;top:812px;width:1597px;height:1px;background:#ffffff;"></div>
<div style="left:149px;top:811px;width:1597px;height:1px;background:#e3e3e3;"></div>
<div style="left:1745px;top:812px;width:1px;height:280px;background:#a0a0a0;"></div>
<div style="left:1746px;top:812px;width:1px;height:280px;background:#696969;"></div>
<div style="left:16px;top:816px;width:300px;height:1px;background:#ffffff;"></div>
<div style="left:20px;top:819px;width:1px;height:20px;background:#ffffff;"></div>
<div style="left:21px;top:819px;width:1px;height:20px;background:#a0a0a0;"></div>
<svg style="left:26.5px;top:821px" width="16" height="16" viewBox="0 0 16 16"><path d="M2.500 0h8.500l3.500 3.500V16H2.500z" fill="#2a8a58"/><path d="M4.500 3.400h8" stroke="#fff" stroke-width="1" stroke-dasharray="1.600 .9"/><rect x=".3" y="5.200" width="11" height="8.300" rx="1.500" fill="#0d4a2a"/><text x="5.600" y="12.600" font-size="8.500" font-weight="bold" fill="#fff" text-anchor="middle" font-family="Liberation Sans,sans-serif" textLength="9.500" lengthAdjust="spacingAndGlyphs">КА</text><path d="M12.300 6.500v1.200M12.300 9v1.200M12.300 11.500v1.200" stroke="#fff" stroke-width="1.100"/><path d="M3.500 14.700h10" stroke="#4aa878" stroke-width=".8"/></svg>
<span class="s" style="top:821px;left:47.6px;transform-origin:0 0;line-height:16px;transform:scaleX(1.014);">Открыть справочник</span>
<div style="left:171px;top:818px;width:1px;height:22px;background:#a0a0a0;"></div>
<div style="left:172px;top:818px;width:1px;height:22px;background:#ffffff;"></div>
<svg style="left:177px;top:821px" width="16" height="16" viewBox="0 0 16 16"><path d="M6.800 9.200L1.500 14.500" stroke="#d07020" stroke-width="2.600" stroke-linecap="round"/><circle cx="10" cy="6" r="4.600" fill="#c8e0f8" stroke="#c09070" stroke-width="1.300"/><circle cx="9" cy="5" r="1.800" fill="#fff" opacity=".8"/></svg>
<span class="s" style="top:821px;left:198.5px;transform-origin:0 0;line-height:16px;transform:scaleX(1.021);">Поиск в конъюнктурном</span>
<div style="left:16px;top:842px;width:1727px;height:228px;background:#f4f7fc;"></div>
<div style="left:16px;top:842px;width:1727px;height:75px;background:#f0f0f0;"></div>
<div style="left:16px;top:842px;width:1727px;height:1px;background:#a0a0a0;"></div>
<div style="left:16px;top:842px;width:1px;height:245px;background:#a0a0a0;"></div>
<div style="left:28px;top:843px;width:1px;height:74px;background:#a0a0a0;"></div>
<div style="left:17px;top:860px;width:1726px;height:1px;background:#a0a0a0;"></div>
<div style="left:17px;top:861px;width:11px;height:1px;background:#ffffff;"></div>
<div style="left:68px;top:861px;width:1px;height:56px;background:#a0a0a0;"></div>
<div style="left:16px;top:917px;width:1727px;height:1px;background:#a0a0a0;"></div>
<div style="left:17px;top:843px;width:11px;height:1px;background:#ffffff;"></div>
<div style="left:17px;top:843px;width:1px;height:74px;background:#ffffff;"></div>
<div style="left:29px;top:843px;width:1714px;height:1px;background:#ffffff;"></div>
<div style="left:29px;top:843px;width:1px;height:17px;background:#ffffff;"></div>
<div style="left:29px;top:861px;width:39px;height:1px;background:#ffffff;"></div>
<div style="left:29px;top:861px;width:1px;height:56px;background:#ffffff;"></div>
<div style="left:69px;top:861px;width:1602px;height:1px;background:#ffffff;"></div>
<div style="left:69px;top:861px;width:1px;height:56px;background:#ffffff;"></div>
<div style="left:1672px;top:861px;width:71px;height:1px;background:#ffffff;"></div>
<div style="left:1672px;top:861px;width:1px;height:56px;background:#ffffff;"></div>
<span class="g" style="top:845.5px;left:146.5px;transform-origin:0 0;transform:scaleX(0.904);">Строительный ресурс</span>
<span class="g" style="top:882px;left:31.5px;transform-origin:0 0;transform:scaleX(0.816);">№</span>
<span class="g" style="top:882px;left:71.5px;transform-origin:0 0;transform:scaleX(0.899);">Обоснование</span>
<span class="g" style="top:845.5px;left:1659px;transform-origin:0 0;transform:scaleX(0.869);">Расчетные данны</span>
<div style="left:1671px;top:861px;width:1px;height:56px;background:#a0a0a0;"></div>
<span class="g" style="top:877px;left:1653px;transform-origin:0 0;transform:scaleX(0.910);">ду</span>
<span class="g" style="top:882px;left:1674px;transform-origin:0 0;transform:scaleX(0.929);">Перевозка, %</span>
<div style="left:1742px;top:843px;width:2px;height:74px;background:#f0f0f0;"></div>
<div style="left:1743px;top:842px;width:1px;height:245px;background:#ffffff;"></div>
<div style="left:1744px;top:842px;width:1px;height:245px;background:#f0f0f0;"></div>
<div style="left:17px;top:1070px;width:1726px;height:17px;background:#f8f8f8;background-image:repeating-conic-gradient(#ffffff 0% 25%, #f0f0f0 0% 50%);background-size:2px 2px"></div>
<div style="left:17px;top:1070px;width:17px;height:17px;background:#f0f0f0;box-sizing:border-box;border:1px solid;border-color:#ffffff #696969 #696969 #ffffff;box-shadow:inset -1px -1px 0 #a0a0a0"></div>
<svg style="left:22px;top:1075px" width="7" height="7" viewBox="0 0 7 7"><path d="M6 0v7L2 3.500z" fill="#000"/></svg>
<div style="left:1725px;top:1070px;width:17px;height:17px;background:#f0f0f0;box-sizing:border-box;border:1px solid;border-color:#ffffff #696969 #696969 #ffffff;box-shadow:inset -1px -1px 0 #a0a0a0"></div>
<svg style="left:1730px;top:1075px" width="7" height="7" viewBox="0 0 7 7"><path d="M2 0v7l4-3.500z" fill="#000"/></svg>
<div style="left:34px;top:1070px;width:884px;height:17px;background:#f0f0f0;box-sizing:border-box;border:1px solid;border-color:#ffffff #696969 #696969 #ffffff;box-shadow:inset -1px -1px 0 #a0a0a0"></div>
<div style="left:12px;top:1090px;width:1735px;height:1px;background:#a0a0a0;"></div>
<div style="left:12px;top:1091px;width:1735px;height:1px;background:#696969;"></div>
<div style="left:2px;top:1092px;width:1745px;height:1px;background:#ffffff;"></div>
<div style="left:2px;top:1093px;width:1745px;height:1px;background:#ffffff;"></div>
<div style="left:2px;top:1096px;width:86px;height:26px;background:#f0f0f0;box-sizing:border-box;border:1px solid;border-color:#a0a0a0 #ffffff #ffffff #a0a0a0"></div>
<div style="left:91px;top:1096px;width:297px;height:26px;background:#f0f0f0;box-sizing:border-box;border:1px solid;border-color:#a0a0a0 #ffffff #ffffff #a0a0a0"></div>
<div style="left:391px;top:1096px;width:1287px;height:26px;background:#f0f0f0;box-sizing:border-box;border:1px solid;border-color:#a0a0a0 #ffffff #ffffff #a0a0a0"></div>
<div style="left:1681px;top:1096px;width:30px;height:26px;background:#f0f0f0;box-sizing:border-box;border:1px solid;border-color:#a0a0a0 #ffffff #ffffff #a0a0a0"></div>
<div style="left:1715px;top:1096px;width:30px;height:26px;background:#f0f0f0;box-sizing:border-box;border:1px solid;border-color:#a0a0a0 #ffffff #ffffff #a0a0a0"></div>
<div style="left:88px;top:1094px;width:1px;height:28px;background:#a0a0a0;"></div>
<div style="left:89px;top:1094px;width:1px;height:28px;background:#ffffff;"></div>
<div style="left:388px;top:1094px;width:1px;height:28px;background:#a0a0a0;"></div>
<div style="left:389px;top:1094px;width:1px;height:28px;background:#ffffff;"></div>
<div style="left:1678px;top:1094px;width:1px;height:28px;background:#a0a0a0;"></div>
<div style="left:1679px;top:1094px;width:1px;height:28px;background:#ffffff;"></div>
<div style="left:1712px;top:1094px;width:1px;height:28px;background:#a0a0a0;"></div>
<div style="left:1713px;top:1094px;width:1px;height:28px;background:#ffffff;"></div>
<span class="s" style="top:1100.5px;left:396px;transform-origin:0 0;line-height:16px;transform:scaleX(0.955);">ИТОГО (руб)  По ЛС: 56 488,97</span>
<span class="s" style="top:1100.5px;left:576px;transform-origin:0 0;line-height:16px;transform:scaleX(0.951);">По объекту: 56 488,97</span>
<span class="s" style="top:1100.5px;left:1722px;transform-origin:0 0;line-height:16px;transform:scaleX(0.923);">RU</span>
<svg style="left:1686px;top:1099px" width="20" height="20" viewBox="0 0 20 20"><circle cx="10" cy="10" r="8" fill="#9a9a9a"/><rect x="8.800" y="5.500" width="2.400" height="2.200" fill="#e4e4e4"/><rect x="8.800" y="9" width="2.400" height="6" fill="#e4e4e4"/><path d="M2 2l16 16" stroke="#ff0000" stroke-width="1.800"/></svg>
<div style="left:0px;top:1123px;width:1748px;height:1px;background:#808080;"></div>
<div style="left:0px;top:1124px;width:1748px;height:1px;background:#808080;"></div>
<div style="left:269px;top:328px;width:1389px;height:612px;background:#f0f0f0;box-sizing:border-box;border:1px solid #6e6e6e"></div>
<div style="left:270px;top:329px;width:1387px;height:31px;background:#ffffff;"></div>
<span class="s" style="top:336px;left:299px;transform-origin:0 0;line-height:16px;transform:scaleX(1.004);">Конъюнктурный анализ [справочник проекта: Новый проект Строительство коттеджа]</span>
<div style="left:1538px;top:343px;width:11px;height:1px;background:#000;"></div>
<div style="left:1584px;top:338px;width:10px;height:10px;box-sizing:border-box;border:1px solid #000"></div>
<svg style="left:1628px;top:337px" width="12" height="12" viewBox="0 0 12 12"><path d="M1 1.200l10.200 10.200M11.200 1.200L1 11.400" stroke="#000" stroke-width="1.100"/></svg>
<div style="left:274px;top:363px;width:1px;height:46px;background:#a0a0a0;"></div>
<div style="left:275px;top:363px;width:1px;height:46px;background:#ffffff;"></div>
<div style="left:279px;top:385px;width:1372px;height:1px;background:#a0a0a0;"></div>
<div style="left:279px;top:386px;width:1372px;height:1px;background:#ffffff;"></div>
<svg style="left:280.5px;top:364px" width="16" height="16" viewBox="0 0 16 16"><path d="M2.500 0h8.500l3.500 3.500V16H2.500z" fill="#2a8a58"/><path d="M4.500 3.400h8" stroke="#fff" stroke-width="1" stroke-dasharray="1.600 .9"/><rect x=".3" y="5.200" width="11" height="8.300" rx="1.500" fill="#0d4a2a"/><text x="5.600" y="12.600" font-size="8.500" font-weight="bold" fill="#fff" text-anchor="middle" font-family="Liberation Sans,sans-serif" textLength="9.500" lengthAdjust="spacingAndGlyphs">КА</text><path d="M12.300 6.500v1.200M12.300 9v1.200M12.300 11.500v1.200" stroke="#fff" stroke-width="1.100"/><path d="M3.500 14.700h10" stroke="#4aa878" stroke-width=".8"/></svg>
<span class="s" style="top:364px;left:301.5px;transform-origin:0 0;line-height:16px;">Переключиться</span>
<svg style="left:398px;top:364px" width="16" height="16" viewBox="0 0 16 16"><path d="M2 8h12M8 2v12" stroke="#408020" stroke-width="4"/><path d="M2.500 8h11M8 2.500v11" stroke="#70b030" stroke-width="2.600"/></svg>
<span class="s" style="top:364px;left:418px;transform-origin:0 0;line-height:16px;transform:scaleX(1.008);">Добавить группу</span>
<svg style="left:520px;top:364px" width="16" height="16" viewBox="0 0 16 16"><path d="M2 8h12M8 2v12" stroke="#408020" stroke-width="4"/><path d="M2.500 8h11M8 2.500v11" stroke="#70b030" stroke-width="2.600"/></svg>
<span class="s" style="top:364px;left:540.2px;transform-origin:0 0;line-height:16px;">Добавить позицию</span>
<svg style="left:654px;top:364px" width="16" height="16" viewBox="0 0 16 16"><rect x="1.500" y="3.500" width="8" height="10" fill="#eef6fa" stroke="#80a8b8" stroke-width=".9"/><rect x="5.500" y="1.500" width="9" height="13" fill="#f4fafc" stroke="#80a8b8" stroke-width=".9"/><path d="M7.300 5h5.500M7.300 7.500h5.500M7.300 10h5.500M7.300 12.500h3" stroke="#80a8b8" stroke-width=".8"/></svg>
<span class="s" style="top:364px;left:674.2px;transform-origin:0 0;line-height:16px;transform:scaleX(1.011);">Создать копию группы</span>
<svg style="left:810px;top:364px" width="16" height="16" viewBox="0 0 16 16"><path d="M3 3l10 10M13 3L3 13" stroke="#f04820" stroke-width="1.600" stroke-linecap="round"/></svg>
<span class="s" style="top:364px;left:830px;transform-origin:0 0;line-height:16px;transform:scaleX(0.954);">Удалить</span>
<div style="left:882px;top:361px;width:1px;height:22px;background:#a0a0a0;"></div>
<div style="left:883px;top:361px;width:1px;height:22px;background:#ffffff;"></div>
<span class="s" style="top:364px;left:892.6px;transform-origin:0 0;line-height:16px;">Перенумеровать группы</span>
<div style="left:1037px;top:361px;width:1px;height:22px;background:#a0a0a0;"></div>
<div style="left:1038px;top:361px;width:1px;height:22px;background:#ffffff;"></div>
<svg style="left:1044px;top:364px" width="16" height="16" viewBox="0 0 16 16"><path d="M7.500 2.500A5.500 5.500 0 0 0 3.500 12" fill="none" stroke="#208820" stroke-width="2.300"/><path d="M8.500 13.500A5.500 5.500 0 0 0 12.500 4" fill="none" stroke="#208820" stroke-width="2.300"/><path d="M7 .3l4 2.700-4 2.800zM9 15.700l-4-2.700 4-2.800z" fill="#208820"/></svg>
<span class="s" style="top:364px;left:1064.5px;transform-origin:0 0;line-height:16px;transform:scaleX(0.981);">Обновить</span>
<div style="left:1126px;top:361px;width:1px;height:22px;background:#a0a0a0;"></div>
<div style="left:1127px;top:361px;width:1px;height:22px;background:#ffffff;"></div>
<svg style="left:1133px;top:364px" width="16" height="16" viewBox="0 0 16 16"><rect x="1.600" y="1.800" width="12.800" height="12.700" fill="#eef4ee" stroke="#2e7a3a" stroke-width="1.200"/><path d="M3.400 4.200h3.100l1.500 2 1.700-2h3L9.500 8l3.500 4.200h-3.300L8 10 6.300 12.200H3.200L6.500 8z" fill="#1e7a38"/><path d="M3.400 4.200h3.100L8 6.200 9.700 4.200h3L11 6H4.800z" fill="#58b068"/></svg>
<span class="s" style="top:364px;left:1153px;transform-origin:0 0;line-height:16px;transform:scaleX(0.985);">Импорт из Excel</span>
<svg style="left:1251px;top:364px" width="16" height="16" viewBox="0 0 16 16"><rect x="1.600" y="1.800" width="12.800" height="12.700" fill="#eef4ee" stroke="#2e7a3a" stroke-width="1.200"/><path d="M3.400 4.200h3.100l1.500 2 1.700-2h3L9.500 8l3.500 4.200h-3.300L8 10 6.300 12.200H3.200L6.500 8z" fill="#1e7a38"/><path d="M3.400 4.200h3.100L8 6.200 9.700 4.200h3L11 6H4.800z" fill="#58b068"/></svg>
<span class="s" style="top:364px;left:1270.9px;transform-origin:0 0;line-height:16px;transform:scaleX(0.961);">Экспорт в Excel</span>
<span class="s" style="top:364px;left:1367px;transform-origin:0 0;line-height:16px;transform:scaleX(0.953);">Экспорт в ГГЭ</span>
<svg style="left:281px;top:391.5px" width="16" height="16" viewBox="0 0 16 16"><path d="M3 2h5.500v3H15v4.500H3z" fill="#f8f040" stroke="#8890a0" stroke-width=".8"/><path d="M.8 6h5.200l1.200 1.300h5.800v2h1.500l1 5.200H2.200z" fill="#f8c000" stroke="#8088a0" stroke-width=".9"/><path d="M2.500 8.500h9l1.500 5.500H3.500z" fill="#ffa800" opacity=".55"/><path d="M8 0h2.200v3.500h2.300L9.100 7.800 5.700 3.500H8z" fill="#1878e8"/></svg>
<span class="s" style="top:391.5px;left:301.5px;transform-origin:0 0;line-height:16px;transform:scaleX(0.984);">Загрузить документ</span>
<svg style="left:418px;top:392px" width="16" height="16" viewBox="0 0 16 16"><rect x="3.500" y="1" width="9" height="8" fill="#80ccf8" stroke="#7090b0" stroke-width=".8"/><rect x="1" y="8" width="11" height="6.500" fill="#e8eef4" stroke="#687888" stroke-width=".8"/><path d="M2.500 10.500h8M12 10h3v3" stroke="#687888" stroke-width=".8" fill="none"/><rect x="2.500" y="11.500" width="3.800" height="3" fill="#fff" stroke="#687888" stroke-width=".6"/><rect x="7" y="11.500" width="3.800" height="3" fill="#fff" stroke="#687888" stroke-width=".6"/></svg>
<span class="s" style="top:391.5px;left:439.2px;transform-origin:0 0;line-height:16px;transform:scaleX(1.006);">Просмотр документа</span>
<div style="left:565px;top:389px;width:1px;height:22px;background:#a0a0a0;"></div>
<div style="left:566px;top:389px;width:1px;height:22px;background:#ffffff;"></div>
<span class="s" style="top:391.5px;left:575.2px;transform-origin:0 0;line-height:16px;">Письмо заказчика</span>
<div style="left:685px;top:389px;width:1px;height:22px;background:#a0a0a0;"></div>
<div style="left:686px;top:389px;width:1px;height:22px;background:#ffffff;"></div>
<span class="s" style="top:391.5px;left:694.3px;transform-origin:0 0;line-height:16px;transform:scaleX(0.986);">Параметры</span>
<div style="left:766px;top:389px;width:1px;height:22px;background:#a0a0a0;"></div>
<div style="left:767px;top:389px;width:1px;height:22px;background:#ffffff;"></div>
<svg style="left:772.5px;top:392px" width="16" height="16" viewBox="0 0 16 16"><path d="M2.500 0h8.500l3.500 3.500V16H2.500z" fill="#2a8a58"/><path d="M4.500 3.400h8" stroke="#fff" stroke-width="1" stroke-dasharray="1.600 .9"/><rect x=".3" y="5.200" width="11" height="8.300" rx="1.500" fill="#0d4a2a"/><text x="5.600" y="12.600" font-size="8.500" font-weight="bold" fill="#fff" text-anchor="middle" font-family="Liberation Sans,sans-serif" textLength="9.500" lengthAdjust="spacingAndGlyphs">КА</text><path d="M12.300 6.500v1.200M12.300 9v1.200M12.300 11.500v1.200" stroke="#fff" stroke-width="1.100"/><path d="M3.500 14.700h10" stroke="#4aa878" stroke-width=".8"/></svg>
<span class="s" style="top:391.5px;left:793.6px;transform-origin:0 0;line-height:16px;transform:scaleX(0.949);">Перейти в КА ТСН-2001</span>
<div style="left:270px;top:412px;width:1386px;height:1px;background:#a0a0a0;"></div>
<div style="left:270px;top:413px;width:1386px;height:1px;background:#ffffff;"></div>
<div style="left:271px;top:414px;width:1384px;height:3px;background:#eaeaea;"></div>
<div style="left:271px;top:414px;width:1px;height:463px;background:#e6e6e6;"></div>
<div style="left:1653px;top:414px;width:1px;height:463px;background:#ffffff;"></div>
<div style="left:1656px;top:360px;width:1px;height:579px;background:#8c8c8c;"></div>
<div style="left:275px;top:417px;width:1377px;height:459px;background:#ffffff;"></div>
<div style="left:274px;top:417px;width:1px;height:459px;background:#a0a0a0;"></div>
<div style="left:272px;top:876px;width:1383px;height:1px;background:#696969;"></div>
<div style="left:272px;top:877px;width:1383px;height:1px;background:#a0a0a0;"></div>
<div style="left:1652px;top:416px;width:1px;height:460px;background:#e3e3e3;"></div>
<div style="left:275px;top:417px;width:1360px;height:75px;background:#f0f0f0;"></div>
<div style="left:274px;top:417px;width:1378px;height:1px;background:#a0a0a0;"></div>
<div style="left:287px;top:435px;width:1348px;height:1px;background:#a0a0a0;"></div>
<div style="left:286px;top:417px;width:1px;height:75px;background:#a0a0a0;"></div>
<div style="left:1077px;top:417px;width:1px;height:18px;background:#a0a0a0;"></div>
<div style="left:325px;top:436px;width:1px;height:56px;background:#a0a0a0;"></div>
<div style="left:519px;top:436px;width:1px;height:56px;background:#a0a0a0;"></div>
<div style="left:597px;top:436px;width:1px;height:56px;background:#a0a0a0;"></div>
<div style="left:922px;top:436px;width:1px;height:56px;background:#a0a0a0;"></div>
<div style="left:1077px;top:436px;width:1px;height:56px;background:#a0a0a0;"></div>
<div style="left:1242px;top:436px;width:1px;height:56px;background:#a0a0a0;"></div>
<div style="left:1360px;top:436px;width:1px;height:56px;background:#a0a0a0;"></div>
<div style="left:1466px;top:436px;width:1px;height:56px;background:#a0a0a0;"></div>
<div style="left:1572px;top:436px;width:1px;height:56px;background:#a0a0a0;"></div>
<div style="left:1629px;top:436px;width:1px;height:56px;background:#a0a0a0;"></div>
<div style="left:275px;top:492px;width:1360px;height:1px;background:#a0a0a0;"></div>
<div style="left:275px;top:418px;width:11px;height:1px;background:#ffffff;"></div>
<div style="left:275px;top:418px;width:1px;height:17px;background:#ffffff;"></div>
<div style="left:275px;top:435px;width:11px;height:1px;background:#a0a0a0;"></div>
<div style="left:275px;top:436px;width:11px;height:1px;background:#ffffff;"></div>
<div style="left:275px;top:436px;width:1px;height:56px;background:#ffffff;"></div>
<div style="left:287px;top:418px;width:790px;height:1px;background:#ffffff;"></div>
<div style="left:287px;top:418px;width:1px;height:17px;background:#ffffff;"></div>
<div style="left:1078px;top:418px;width:557px;height:1px;background:#ffffff;"></div>
<div style="left:1078px;top:418px;width:1px;height:17px;background:#ffffff;"></div>
<div style="left:287px;top:436px;width:38px;height:1px;background:#ffffff;"></div>
<div style="left:287px;top:436px;width:1px;height:56px;background:#ffffff;"></div>
<div style="left:326px;top:436px;width:193px;height:1px;background:#ffffff;"></div>
<div style="left:326px;top:436px;width:1px;height:56px;background:#ffffff;"></div>
<div style="left:520px;top:436px;width:77px;height:1px;background:#ffffff;"></div>
<div style="left:520px;top:436px;width:1px;height:56px;background:#ffffff;"></div>
<div style="left:598px;top:436px;width:324px;height:1px;background:#ffffff;"></div>
<div style="left:598px;top:436px;width:1px;height:56px;background:#ffffff;"></div>
<div style="left:923px;top:436px;width:154px;height:1px;background:#ffffff;"></div>
<div style="left:923px;top:436px;width:1px;height:56px;background:#ffffff;"></div>
<div style="left:1078px;top:436px;width:164px;height:1px;background:#ffffff;"></div>
<div style="left:1078px;top:436px;width:1px;height:56px;background:#ffffff;"></div>
<div style="left:1243px;top:436px;width:117px;height:1px;background:#ffffff;"></div>
<div style="left:1243px;top:436px;width:1px;height:56px;background:#ffffff;"></div>
<div style="left:1361px;top:436px;width:105px;height:1px;background:#ffffff;"></div>
<div style="left:1361px;top:436px;width:1px;height:56px;background:#ffffff;"></div>
<div style="left:1467px;top:436px;width:105px;height:1px;background:#ffffff;"></div>
<div style="left:1467px;top:436px;width:1px;height:56px;background:#ffffff;"></div>
<div style="left:1573px;top:436px;width:56px;height:1px;background:#ffffff;"></div>
<div style="left:1573px;top:436px;width:1px;height:56px;background:#ffffff;"></div>
<div style="left:1630px;top:436px;width:5px;height:1px;background:#ffffff;"></div>
<div style="left:1630px;top:436px;width:1px;height:56px;background:#ffffff;"></div>
<span class="g" style="top:420px;left:683px;transform-origin:50% 0;transform:translateX(-50%) scaleX(0.908);">Строительный ресурс</span>
<span class="g" style="top:420px;left:1249.5px;transform-origin:0 0;transform:scaleX(0.934);">Данные из обосновывающего документа производителя/поставщика</span>
<span class="g" style="top:457px;left:290px;transform-origin:0 0;transform:scaleX(0.816);">№</span>
<span class="g" style="top:457px;left:328.5px;transform-origin:0 0;transform:scaleX(0.899);">Обоснование</span>
<span class="g" style="top:457px;left:522.5px;transform-origin:0 0;transform:scaleX(0.910);">Код КСР</span>
<span class="g" style="top:457px;left:600.5px;transform-origin:0 0;transform:scaleX(0.925);">Наименование строительного ресурса в смете</span>
<span class="g" style="top:445px;left:925.5px;transform-origin:0 0;line-height:13px;transform:scaleX(0.910);">Единица измерения</span>
<span class="g" style="top:458px;left:925.5px;transform-origin:0 0;line-height:13px;transform:scaleX(0.910);">строительного ресурса в</span>
<span class="g" style="top:471px;left:925.5px;transform-origin:0 0;line-height:13px;transform:scaleX(0.910);">смете</span>
<span class="g" style="top:452px;left:1080.5px;transform-origin:0 0;line-height:13px;transform:scaleX(0.910);">Полное наименование</span>
<span class="g" style="top:465px;left:1080.5px;transform-origin:0 0;line-height:13px;transform:scaleX(0.924);">строительного ресурса, затрат</span>
<span class="g" style="top:445px;left:1245.5px;transform-origin:0 0;line-height:13px;transform:scaleX(0.910);">Единица измерения</span>
<span class="g" style="top:458px;left:1245.5px;transform-origin:0 0;line-height:13px;transform:scaleX(0.910);">строительного</span>
<span class="g" style="top:471px;left:1245.5px;transform-origin:0 0;line-height:13px;transform:scaleX(0.910);">ресурса, затрат</span>
<span class="g" style="top:445px;left:1363.5px;transform-origin:0 0;line-height:13px;transform:scaleX(0.910);">Дата цены из</span>
<span class="g" style="top:458px;left:1363.5px;transform-origin:0 0;line-height:13px;transform:scaleX(0.942);">прайса / ФГИС ЦС</span>
<span class="g" style="top:471px;left:1363.5px;transform-origin:0 0;line-height:13px;transform:scaleX(0.910);">(для ФСБЦ-2022)</span>
<span class="g" style="top:439px;left:1469.5px;transform-origin:0 0;line-height:13px;transform:scaleX(0.940);">Текущая отпускная</span>
<span class="g" style="top:452px;left:1469.5px;transform-origin:0 0;line-height:13px;transform:scaleX(0.910);">цена за единицу</span>
<span class="g" style="top:465px;left:1469.5px;transform-origin:0 0;line-height:13px;transform:scaleX(0.910);">измерения с НДС,</span>
<span class="g" style="top:478px;left:1469.5px;transform-origin:0 0;line-height:13px;transform:scaleX(0.910);">руб.</span>
<span class="g" style="top:457.5px;left:1575.5px;transform-origin:0 0;transform:scaleX(0.888);">НДС, %</span>
<div style="left:1632px;top:441px;width:2px;height:1px;background:#000;"></div>
<div style="left:1632px;top:460px;width:1px;height:8px;background:#000;"></div>
<div style="left:1632px;top:473px;width:1px;height:9px;background:#000;"></div>
<div style="left:287px;top:493px;width:1348px;height:33px;background:#d2d9e8;"></div>
<div style="left:275px;top:493px;width:11px;height:180px;background:#f0f0f0;"></div>
<div style="left:287px;top:526px;width:16px;height:147px;background:#d2d9e8;"></div>
<div style="left:289px;top:503px;width:12px;height:12px;background:#f0f0f0;box-sizing:border-box;border:1px solid;border-color:#fff #696969 #696969 #fff"></div>
<div style="left:292px;top:508px;width:6px;height:1px;background:#000;"></div>
<span class="g" style="top:502px;left:326.7px;transform-origin:0 0;font-weight:bold;transform:scaleX(0.975);">Конъюнктурный анализ</span>
<div style="left:304px;top:527px;width:215px;height:43px;background:#f5f7fb;"></div>
<div style="left:304px;top:571px;width:215px;height:44px;background:#f5f7fb;"></div>
<div style="left:304px;top:616px;width:215px;height:57px;background:#f5f7fb;"></div>
<div style="left:598px;top:527px;width:324px;height:43px;background:#d7dae5;"></div>
<div style="left:304px;top:570px;width:1331px;height:1px;background:#c9d2e8;"></div>
<div style="left:275px;top:570px;width:12px;height:1px;background:#a0a0a0;"></div>
<div style="left:304px;top:615px;width:1331px;height:1px;background:#c9d2e8;"></div>
<div style="left:275px;top:615px;width:12px;height:1px;background:#a0a0a0;"></div>
<div style="left:304px;top:673px;width:1331px;height:1px;background:#c9d2e8;"></div>
<div style="left:275px;top:673px;width:12px;height:1px;background:#a0a0a0;"></div>
<div style="left:275px;top:526px;width:12px;height:1px;background:#a0a0a0;"></div>
<div style="left:325px;top:528px;width:1px;height:145px;background:#c9d2e8;"></div>
<div style="left:519px;top:528px;width:1px;height:145px;background:#c9d2e8;"></div>
<div style="left:597px;top:528px;width:1px;height:145px;background:#c9d2e8;"></div>
<div style="left:922px;top:528px;width:1px;height:145px;background:#c9d2e8;"></div>
<div style="left:1077px;top:528px;width:1px;height:145px;background:#c9d2e8;"></div>
<div style="left:1242px;top:528px;width:1px;height:145px;background:#c9d2e8;"></div>
<div style="left:1360px;top:528px;width:1px;height:145px;background:#c9d2e8;"></div>
<div style="left:1466px;top:528px;width:1px;height:145px;background:#c9d2e8;"></div>
<div style="left:1572px;top:528px;width:1px;height:145px;background:#c9d2e8;"></div>
<div style="left:1629px;top:528px;width:1px;height:145px;background:#c9d2e8;"></div>
<div style="left:303px;top:526px;width:1px;height:148px;background:#000;"></div>
<div style="left:303px;top:526px;width:1332px;height:1px;background:#000;"></div>
<div style="left:286px;top:493px;width:1px;height:180px;background:#a0a0a0;"></div>
<svg style="left:277px;top:543px" width="8" height="10" viewBox="0 0 8 10"><path d="M1.500 1l4 4-4 4z" fill="none" stroke="#000" stroke-width="1"/></svg>
<span class="g" style="top:529px;left:307px;transform-origin:0 0;line-height:13px;font-weight:bold;transform:scaleX(0.959);">1.1</span>
<span class="g" style="top:529px;left:328.5px;transform-origin:0 0;line-height:13px;transform:scaleX(0.902);">ТЦ_23.8.04.02_55_552345</span>
<span class="g" style="top:542px;left:328.5px;transform-origin:0 0;line-height:13px;transform:scaleX(0.888);">6789_30.12.2025_01_1.1</span>
<span class="g" style="top:555px;left:328.5px;transform-origin:0 0;line-height:13px;color:#008000;transform:scaleX(0.895);">Строительные</span>
<span class="g" style="top:529px;left:522.5px;transform-origin:0 0;line-height:13px;transform:scaleX(0.899);">23.8.04.02</span>
<svg style="left:579px;top:528px" width="16" height="16" viewBox="0 0 16 16"><g fill="#f07808" stroke="#b84800" stroke-width=".5"><rect x="4.600" y="6.500" width="5.800" height="2.800" rx="1.300"/><rect x="1.600" y="8.600" width="5.300" height="2.700" rx="1.300"/><rect x="7.100" y="8.600" width="5.300" height="2.700" rx="1.300"/><rect x=".4" y="10.700" width="4.600" height="2.800" rx="1.300"/><rect x="5.200" y="10.700" width="4.800" height="2.800" rx="1.300"/><rect x="10.300" y="10.700" width="5.200" height="2.800" rx="1.300"/></g><path d="M6 7.700h3.200M3 9.800h2.800M8.500 9.800h2.800M1.500 12h2.500M6.500 12h2.500M11.500 12h3" stroke="#ffb040" stroke-width=".7"/></svg>
<span class="g" style="top:529px;left:600.5px;transform-origin:0 0;line-height:13px;transform:scaleX(0.909);">Коллектор латунный проходной с внутренней резьбой,</span>
<span class="g" style="top:542px;left:600.5px;transform-origin:0 0;line-height:13px;transform:scaleX(0.921);">диаметр условного прохода 1 1/4" (32 мм), на 2 отвода с</span>
<span class="g" style="top:555px;left:600.5px;transform-origin:0 0;line-height:13px;transform:scaleX(0.921);">наружной резьбой диаметром условного прохода 3/4" (20 мм)</span>
<span class="g" style="top:529px;left:925.5px;transform-origin:0 0;line-height:13px;transform:scaleX(0.791);">ШТ</span>
<span class="g" style="top:529px;left:1080.5px;transform-origin:0 0;line-height:13px;transform:scaleX(0.928);">Коллектор</span>
<span class="g" style="top:529px;left:1245.5px;transform-origin:0 0;line-height:13px;transform:scaleX(0.791);">ШТ</span>
<span class="g" style="top:529px;left:1363.5px;transform-origin:0 0;line-height:13px;transform:scaleX(0.888);">30.12.25</span>
<span class="g" style="top:573.5px;left:307px;transform-origin:0 0;line-height:13px;font-weight:bold;transform:scaleX(0.959);">1.2</span>
<span class="g" style="top:573.5px;left:328.5px;transform-origin:0 0;line-height:13px;transform:scaleX(0.902);">ТЦ_23.8.04.02_55_551234</span>
<span class="g" style="top:586.5px;left:328.5px;transform-origin:0 0;line-height:13px;transform:scaleX(0.888);">5678_31.12.2025_01_1.2</span>
<span class="g" style="top:599.5px;left:328.5px;transform-origin:0 0;line-height:13px;color:#008000;transform:scaleX(0.895);">Строительные</span>
<span class="g" style="top:573.5px;left:522.5px;transform-origin:0 0;line-height:13px;transform:scaleX(0.899);">23.8.04.02</span>
<svg style="left:579px;top:572.5px" width="16" height="16" viewBox="0 0 16 16"><g fill="#f07808" stroke="#b84800" stroke-width=".5"><rect x="4.600" y="6.500" width="5.800" height="2.800" rx="1.300"/><rect x="1.600" y="8.600" width="5.300" height="2.700" rx="1.300"/><rect x="7.100" y="8.600" width="5.300" height="2.700" rx="1.300"/><rect x=".4" y="10.700" width="4.600" height="2.800" rx="1.300"/><rect x="5.200" y="10.700" width="4.800" height="2.800" rx="1.300"/><rect x="10.300" y="10.700" width="5.200" height="2.800" rx="1.300"/></g><path d="M6 7.700h3.200M3 9.800h2.800M8.500 9.800h2.800M1.500 12h2.500M6.500 12h2.500M11.500 12h3" stroke="#ffb040" stroke-width=".7"/></svg>
<span class="g" style="top:573.5px;left:600.5px;transform-origin:0 0;line-height:13px;transform:scaleX(0.909);">Коллектор латунный проходной с внутренней резьбой,</span>
<span class="g" style="top:586.5px;left:600.5px;transform-origin:0 0;line-height:13px;transform:scaleX(0.921);">диаметр условного прохода 1 1/4" (32 мм), на 2 отвода с</span>
<span class="g" style="top:599.5px;left:600.5px;transform-origin:0 0;line-height:13px;transform:scaleX(0.921);">наружной резьбой диаметром условного прохода 3/4" (20 мм)</span>
<span class="g" style="top:573.5px;left:925.5px;transform-origin:0 0;line-height:13px;transform:scaleX(0.791);">ШТ</span>
<span class="g" style="top:573.5px;left:1080.5px;transform-origin:0 0;line-height:13px;transform:scaleX(0.928);">Коллектор</span>
<span class="g" style="top:573.5px;left:1245.5px;transform-origin:0 0;line-height:13px;transform:scaleX(0.791);">ШТ</span>
<span class="g" style="top:573.5px;left:1363.5px;transform-origin:0 0;line-height:13px;transform:scaleX(0.888);">31.12.25</span>
<span class="g" style="top:573.5px;right:178px;transform-origin:100% 0;line-height:13px;transform:scaleX(0.899);">0,00</span>
<span class="g" style="top:573.5px;right:121px;transform-origin:100% 0;line-height:13px;transform:scaleX(0.884);">20,00%</span>
<span class="g" style="top:619px;left:328.5px;transform-origin:0 0;line-height:13px;font-weight:bold;transform:scaleX(1.057);">ТЦ_23.8.04.02_77_772345</span>
<span class="g" style="top:632px;left:328.5px;transform-origin:0 0;line-height:13px;font-weight:bold;transform:scaleX(1.031);">6789_15.12.2025_01_1.3</span>
<span class="g" style="top:645px;left:328.5px;transform-origin:0 0;line-height:13px;color:#008000;font-weight:bold;transform:scaleX(0.951);">Строительные</span>
<span class="g" style="top:619px;left:522.5px;transform-origin:0 0;line-height:13px;font-weight:bold;transform:scaleX(1.059);">23.8.04...</span>
<svg style="left:579px;top:618px" width="16" height="16" viewBox="0 0 16 16"><g fill="#f07808" stroke="#b84800" stroke-width=".5"><rect x="4.600" y="6.500" width="5.800" height="2.800" rx="1.300"/><rect x="1.600" y="8.600" width="5.300" height="2.700" rx="1.300"/><rect x="7.100" y="8.600" width="5.300" height="2.700" rx="1.300"/><rect x=".4" y="10.700" width="4.600" height="2.800" rx="1.300"/><rect x="5.200" y="10.700" width="4.800" height="2.800" rx="1.300"/><rect x="10.300" y="10.700" width="5.200" height="2.800" rx="1.300"/></g><path d="M6 7.700h3.200M3 9.800h2.800M8.500 9.800h2.800M1.500 12h2.500M6.500 12h2.500M11.500 12h3" stroke="#ffb040" stroke-width=".7"/></svg>
<span class="g" style="top:619px;left:600.5px;transform-origin:0 0;line-height:13px;font-weight:bold;transform:scaleX(0.982);">Коллектор латунный проходной с внутренней</span>
<span class="g" style="top:632px;left:600.5px;transform-origin:0 0;line-height:13px;font-weight:bold;transform:scaleX(1.025);">резьбой, диаметр условного прохода 1 1/4" (32 мм),</span>
<span class="g" style="top:645px;left:600.5px;transform-origin:0 0;line-height:13px;font-weight:bold;transform:scaleX(1.007);">на 2 отвода с наружной резьбой диаметром</span>
<span class="g" style="top:658px;left:600.5px;transform-origin:0 0;line-height:13px;font-weight:bold;transform:scaleX(1.025);">условного прохода 3/4" (20 мм)</span>
<span class="g" style="top:619px;left:925.5px;transform-origin:0 0;line-height:13px;font-weight:bold;transform:scaleX(0.825);">ШТ</span>
<span class="g" style="top:619px;left:1080.5px;transform-origin:0 0;line-height:13px;font-weight:bold;">Коллектор</span>
<span class="g" style="top:619px;left:1245.5px;transform-origin:0 0;line-height:13px;font-weight:bold;transform:scaleX(0.825);">ШТ</span>
<span class="g" style="top:619px;left:1363.5px;transform-origin:0 0;line-height:13px;font-weight:bold;transform:scaleX(1.070);">15.12.25</span>
<span class="g" style="top:619px;right:178px;transform-origin:100% 0;line-height:13px;font-weight:bold;transform:scaleX(1.070);">0,00</span>
<span class="g" style="top:619px;right:121px;transform-origin:100% 0;line-height:13px;font-weight:bold;transform:scaleX(1.056);">20,00%</span>
<div style="left:304px;top:616px;width:21px;height:57px;background:#ffffff;"></div>
<svg style="left:306px;top:618px" width="17" height="16" viewBox="0 0 17 16"><path d="M6 .3h8.500l2 2V15.500H6z" fill="#d4dae4" stroke="#90a0b8" stroke-width=".7"/><rect x="8.500" y="5" width="6.500" height="6" fill="#f00018"/><rect x="7.500" y="12" width="8" height="2.500" fill="#f4f6fa"/><path d="M1.500 5.500h5.500l4.800 .8v1.800H7.500v.8h2v1.500h-2v.8h1.600v1.400H7.500v.6H3.500l-2-1.800z" fill="#fff8e0" stroke="#000" stroke-width=".8"/><path d="M2.500 7.500l2 3M2.300 10l2-1.500" stroke="#e8a820" stroke-width=".7"/></svg>
<div style="left:1061px;top:528px;width:16px;height:41px;background:#f0f0f0;box-sizing:border-box;border:1px solid;border-color:#fff #8c8c8c #8c8c8c #fff;box-shadow:inset -1px -1px 0 #d0d0d0"></div>
<div style="left:1065px;top:548px;width:2px;height:2px;background:#000;"></div>
<div style="left:1068px;top:548px;width:2px;height:2px;background:#000;"></div>
<div style="left:1071px;top:548px;width:2px;height:2px;background:#000;"></div>
<div style="left:1344px;top:528px;width:16px;height:41px;background:#f0f0f0;box-sizing:border-box;border:1px solid;border-color:#fff #8c8c8c #8c8c8c #fff;box-shadow:inset -1px -1px 0 #d0d0d0"></div>
<div style="left:1348px;top:548px;width:2px;height:2px;background:#000;"></div>
<div style="left:1351px;top:548px;width:2px;height:2px;background:#000;"></div>
<div style="left:1354px;top:548px;width:2px;height:2px;background:#000;"></div>
<div style="left:1450px;top:528px;width:16px;height:41px;background:#f0f0f0;box-sizing:border-box;border:1px solid;border-color:#fff #8c8c8c #8c8c8c #fff;box-shadow:inset -1px -1px 0 #d0d0d0"></div>
<svg style="left:1454px;top:546px" width="7" height="4" viewBox="0 0 7 4"><path d="M0 0h7L3.500 4z" fill="#000"/></svg>
<div style="left:1635px;top:417px;width:17px;height:441px;background:#f8f8f8;background-image:repeating-conic-gradient(#ffffff 0% 25%, #f0f0f0 0% 50%);background-size:2px 2px"></div>
<div style="left:1635px;top:418px;width:17px;height:17px;background:#f0f0f0;box-sizing:border-box;border:1px solid;border-color:#ffffff #696969 #696969 #ffffff;box-shadow:inset -1px -1px 0 #a0a0a0"></div>
<svg style="left:1640px;top:423px" width="7" height="7" viewBox="0 0 7 7"><path d="M0 6h7L3.500 2z" fill="#000"/></svg>
<div style="left:1635px;top:841px;width:17px;height:17px;background:#f0f0f0;box-sizing:border-box;border:1px solid;border-color:#ffffff #696969 #696969 #ffffff;box-shadow:inset -1px -1px 0 #a0a0a0"></div>
<svg style="left:1640px;top:846px" width="7" height="7" viewBox="0 0 7 7"><path d="M0 2h7L3.500 6z" fill="#000"/></svg>
<div style="left:1635px;top:435px;width:17px;height:166px;background:#f0f0f0;box-sizing:border-box;border:1px solid;border-color:#ffffff #696969 #696969 #ffffff;box-shadow:inset -1px -1px 0 #a0a0a0"></div>
<div style="left:275px;top:858px;width:1377px;height:18px;background:#f0f0f0;"></div>
<div style="left:292px;top:859px;width:517px;height:16px;background:#f0f0f0;box-sizing:border-box;border:1px solid;border-color:#ffffff #696969 #696969 #ffffff;box-shadow:inset -1px -1px 0 #a0a0a0"></div>
<svg style="left:280.6px;top:862.4px" width="5.400" height="8.400" viewBox="0 0 5.400 8.400"><path d="M4.300 .8L1.100 4.200 4.300 7.600" stroke="#5e5e5e" stroke-width="1.700" fill="none"/></svg>
<svg style="left:1624.1px;top:862.1999999999999px" width="5.400" height="8.400" viewBox="0 0 5.400 8.400"><path d="M1.100 .8L4.300 4.200 1.100 7.600" stroke="#5e5e5e" stroke-width="1.700" fill="none"/></svg>
<div style="left:361px;top:898px;width:1295px;height:1px;background:#a0a0a0;"></div>
<div style="left:271px;top:899px;width:1385px;height:1px;background:#ffffff;"></div>
<div style="left:271px;top:878px;width:1px;height:21px;background:#ffffff;"></div>
<div style="left:360px;top:878px;width:1px;height:20px;background:#a0a0a0;"></div>
<div style="left:361px;top:878px;width:1px;height:21px;background:#696969;"></div>
<div style="left:272px;top:897px;width:90px;height:1px;background:#696969;"></div>
<div style="left:272px;top:896px;width:89px;height:1px;background:#a0a0a0;"></div>
<span class="g" style="top:882px;left:278.5px;transform-origin:0 0;transform:scaleX(0.899);">Табличный вид</span>
<div style="left:362px;top:878px;width:86px;height:18px;background:#f0f0f0;box-sizing:border-box;border:1px solid;border-color:#f0f0f0 #696969 #696969 #ffffff;box-shadow:inset -1px -1px 0 #a0a0a0"></div>
<span class="g" style="top:880px;left:367px;transform-origin:0 0;transform:scaleX(0.921);">Предпросмотр</span>
<div style="left:1393px;top:906px;width:82px;height:25px;background:#f0f0f0;box-sizing:border-box;border:1px solid #000;box-shadow:inset 1px 1px 0 #fff,inset -1px -1px 0 #696969,inset -2px -2px 0 #a0a0a0"></div>
<div style="left:1397px;top:910px;width:74px;height:17px;box-sizing:border-box;border:1px dotted #000"></div>
<span class="g" style="top:911px;left:1410px;transform-origin:0 0;transform:scaleX(0.924);">Вставить</span>
<div style="left:1481px;top:906px;width:82px;height:25px;background:#f0f0f0;box-sizing:border-box;border:1px solid;border-color:#fff #696969 #696969 #fff;box-shadow:inset -1px -1px 0 #a0a0a0"></div>
<span class="g" style="top:911px;left:1498px;transform-origin:0 0;transform:scaleX(0.908);">Заменить</span>
<div style="left:1568px;top:906px;width:82px;height:25px;background:#f0f0f0;box-sizing:border-box;border:1px solid;border-color:#fff #696969 #696969 #fff;box-shadow:inset -1px -1px 0 #a0a0a0"></div>
<span class="g" style="top:911px;left:1586.5px;transform-origin:0 0;transform:scaleX(0.941);">Закрыть</span>
<div style="left:0px;top:0px;width:1px;height:1125px;background:#808080;"></div>
<div style="left:1px;top:1px;width:1px;height:1122px;background:#ffffff;"></div>
<div style="left:1747px;top:0px;width:1px;height:1125px;background:#808080;"></div>
<div style="left:1746px;top:1px;width:1px;height:24px;background:#ffffff;"></div>
<svg style="left:486px;top:196px" width="44" height="44" viewBox="0 0 44 44"><circle cx="22" cy="22" r="20" fill="#fff" opacity=".55"/><circle cx="22" cy="22" r="18.500" fill="#fff" stroke="#1c1c1c" stroke-width="1.200"/><circle cx="22" cy="22" r="17.500" fill="#fe0000"/><text x="21.700" y="29" font-size="18.500" font-weight="bold" fill="#fff" text-anchor="middle" font-family="Liberation Sans,sans-serif">1</text></svg>
<svg style="left:80px;top:778px" width="44" height="44" viewBox="0 0 44 44"><circle cx="22" cy="22" r="20" fill="#fff" opacity=".55"/><circle cx="22" cy="22" r="18.500" fill="#fff" stroke="#1c1c1c" stroke-width="1.200"/><circle cx="22" cy="22" r="17.500" fill="#fe0000"/><text x="21.700" y="29" font-size="18.500" font-weight="bold" fill="#fff" text-anchor="middle" font-family="Liberation Sans,sans-serif">2</text></svg>
<svg style="left:882px;top:527px" width="44" height="44" viewBox="0 0 44 44"><circle cx="22" cy="22" r="20" fill="#fff" opacity=".55"/><circle cx="22" cy="22" r="18.500" fill="#fff" stroke="#1c1c1c" stroke-width="1.200"/><circle cx="22" cy="22" r="17.500" fill="#fe0000"/><text x="21.700" y="29" font-size="18.500" font-weight="bold" fill="#fff" text-anchor="middle" font-family="Liberation Sans,sans-serif">3</text></svg>
<svg style="left:1300px;top:880px" width="100" height="50" viewBox="0 0 100 50"><path d="M17.500 13.300L68 33.500" stroke="#ff0000" stroke-width="3.200"/><path d="M89.100 41.600L70 26.100 63.900 40.500z" fill="#ff0000"/></svg>
</div>
</body></html>
